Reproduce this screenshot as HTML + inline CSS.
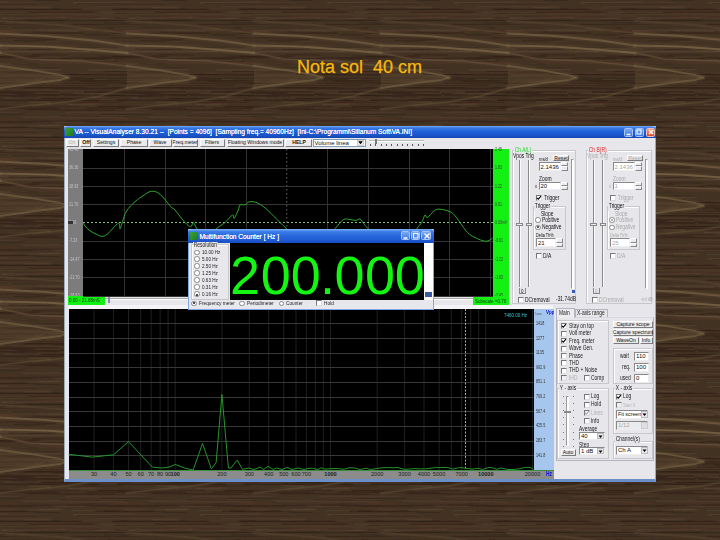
<!DOCTYPE html><html><head><meta charset="utf-8"><style>
*{margin:0;padding:0;box-sizing:border-box}
html,body{width:720px;height:540px;overflow:hidden}
body{position:relative;background:#3b2d21;font-family:"Liberation Sans",sans-serif}
.a{position:absolute}
.t{white-space:nowrap;font-size:6px;line-height:7px;color:#1a1a1a;transform:scaleX(.82) scaleY(1.08);transform-origin:0 0}
.btn span{position:absolute;left:50%;top:-1px;line-height:7px;transform:translateX(-50%) scaleX(.85)}
.btn{position:absolute;background:#ebebee;border:1px solid;border-color:#fff #7a7a7a #7a7a7a #fff;font-size:6px;line-height:6px;text-align:center;color:#111;white-space:nowrap}
.cb{position:absolute;width:6px;height:6px;background:#fff;border:1px solid;border-color:#777 #ddd #ddd #777}
.ed{position:absolute;background:#fff;border:1px solid;border-color:#888 #eee #eee #888;font-size:6px;line-height:6px;color:#111;padding-left:1px;white-space:nowrap}
.grp{position:absolute;border:1px solid #c8c8cc;box-shadow:inset 1px 1px 0 #fff}
.sp{position:absolute;background:#ececef;border:1px solid;border-color:#fff #888 #888 #fff}
</style></head><body><svg class="a" style="left:0;top:0" width="720" height="540"><defs><filter id="bl" x="0" y="0" width="1" height="1"><feGaussianBlur stdDeviation="0.75"/></filter><pattern id="wd" width="127" height="128" patternUnits="userSpaceOnUse"><rect width="127" height="128" fill="#423123"/><path d="M62.3 57.9L165.1 57.4" stroke="#22150c" stroke-opacity="0.30" stroke-width="1.5"/><path d="M-64.7 57.9L38.1 57.4" stroke="#22150c" stroke-opacity="0.30" stroke-width="1.5"/><path d="M189.3 57.9L292.1 57.4" stroke="#22150c" stroke-opacity="0.30" stroke-width="1.5"/><path d="M49.9 102.9L123.3 102.2" stroke="#22150c" stroke-opacity="0.28" stroke-width="1"/><path d="M-77.1 102.9L-3.7 102.2" stroke="#22150c" stroke-opacity="0.28" stroke-width="1"/><path d="M176.9 102.9L250.3 102.2" stroke="#22150c" stroke-opacity="0.28" stroke-width="1"/><path d="M81.9 103.6L100.9 104.0" stroke="#5a3428" stroke-opacity="0.44" stroke-width="1.5"/><path d="M-45.1 103.6L-26.1 104.0" stroke="#5a3428" stroke-opacity="0.44" stroke-width="1.5"/><path d="M208.9 103.6L227.9 104.0" stroke="#5a3428" stroke-opacity="0.44" stroke-width="1.5"/><path d="M71.6 83.2L165.6 83.4" stroke="#22150c" stroke-opacity="0.16" stroke-width="1"/><path d="M-55.4 83.2L38.6 83.4" stroke="#22150c" stroke-opacity="0.16" stroke-width="1"/><path d="M198.6 83.2L292.6 83.4" stroke="#22150c" stroke-opacity="0.16" stroke-width="1"/><path d="M28.0 99.6L99.1 99.6" stroke="#22150c" stroke-opacity="0.22" stroke-width="1.2"/><path d="M-99.0 99.6L-27.9 99.6" stroke="#22150c" stroke-opacity="0.22" stroke-width="1.2"/><path d="M155.0 99.6L226.1 99.6" stroke="#22150c" stroke-opacity="0.22" stroke-width="1.2"/><path d="M47.2 84.8L88.7 85.1" stroke="#5a3428" stroke-opacity="0.45" stroke-width="1"/><path d="M-79.8 84.8L-38.3 85.1" stroke="#5a3428" stroke-opacity="0.45" stroke-width="1"/><path d="M174.2 84.8L215.7 85.1" stroke="#5a3428" stroke-opacity="0.45" stroke-width="1"/><path d="M13.8 40.4L56.2 39.7" stroke="#22150c" stroke-opacity="0.38" stroke-width="1.2"/><path d="M-113.2 40.4L-70.8 39.7" stroke="#22150c" stroke-opacity="0.38" stroke-width="1.2"/><path d="M140.8 40.4L183.2 39.7" stroke="#22150c" stroke-opacity="0.38" stroke-width="1.2"/><path d="M-10.2 37.2L6.4 37.2" stroke="#64503a" stroke-opacity="0.21" stroke-width="1"/><path d="M-137.2 37.2L-120.6 37.2" stroke="#64503a" stroke-opacity="0.21" stroke-width="1"/><path d="M116.8 37.2L133.4 37.2" stroke="#64503a" stroke-opacity="0.21" stroke-width="1"/><path d="M38.4 125.5L60.4 125.2" stroke="#64503a" stroke-opacity="0.38" stroke-width="1.2"/><path d="M-88.6 125.5L-66.6 125.2" stroke="#64503a" stroke-opacity="0.38" stroke-width="1.2"/><path d="M165.4 125.5L187.4 125.2" stroke="#64503a" stroke-opacity="0.38" stroke-width="1.2"/><path d="M-17.8 39.8L36.2 39.2" stroke="#5a3428" stroke-opacity="0.19" stroke-width="1.5"/><path d="M-144.8 39.8L-90.8 39.2" stroke="#5a3428" stroke-opacity="0.19" stroke-width="1.5"/><path d="M109.2 39.8L163.2 39.2" stroke="#5a3428" stroke-opacity="0.19" stroke-width="1.5"/><path d="M97.2 7.7L129.0 8.4" stroke="#22150c" stroke-opacity="0.28" stroke-width="1"/><path d="M-29.8 7.7L2.0 8.4" stroke="#22150c" stroke-opacity="0.28" stroke-width="1"/><path d="M224.2 7.7L256.0 8.4" stroke="#22150c" stroke-opacity="0.28" stroke-width="1"/><path d="M41.6 98.5L93.1 98.1" stroke="#22150c" stroke-opacity="0.45" stroke-width="1"/><path d="M-85.4 98.5L-33.9 98.1" stroke="#22150c" stroke-opacity="0.45" stroke-width="1"/><path d="M168.6 98.5L220.1 98.1" stroke="#22150c" stroke-opacity="0.45" stroke-width="1"/><path d="M98.1 124.3L142.0 125.1" stroke="#5a3428" stroke-opacity="0.21" stroke-width="1.2"/><path d="M-28.9 124.3L15.0 125.1" stroke="#5a3428" stroke-opacity="0.21" stroke-width="1.2"/><path d="M225.1 124.3L269.0 125.1" stroke="#5a3428" stroke-opacity="0.21" stroke-width="1.2"/><path d="M64.8 77.1L83.8 77.5" stroke="#22150c" stroke-opacity="0.28" stroke-width="1"/><path d="M-62.2 77.1L-43.2 77.5" stroke="#22150c" stroke-opacity="0.28" stroke-width="1"/><path d="M191.8 77.1L210.8 77.5" stroke="#22150c" stroke-opacity="0.28" stroke-width="1"/><path d="M23.6 42.1L45.5 41.3" stroke="#22150c" stroke-opacity="0.32" stroke-width="1"/><path d="M-103.4 42.1L-81.5 41.3" stroke="#22150c" stroke-opacity="0.32" stroke-width="1"/><path d="M150.6 42.1L172.5 41.3" stroke="#22150c" stroke-opacity="0.32" stroke-width="1"/><path d="M71.5 47.2L98.5 47.8" stroke="#22150c" stroke-opacity="0.40" stroke-width="1"/><path d="M-55.5 47.2L-28.5 47.8" stroke="#22150c" stroke-opacity="0.40" stroke-width="1"/><path d="M198.5 47.2L225.5 47.8" stroke="#22150c" stroke-opacity="0.40" stroke-width="1"/><path d="M2.7 23.4L104.0 22.9" stroke="#64503a" stroke-opacity="0.22" stroke-width="1"/><path d="M-124.3 23.4L-23.0 22.9" stroke="#64503a" stroke-opacity="0.22" stroke-width="1"/><path d="M129.7 23.4L231.0 22.9" stroke="#64503a" stroke-opacity="0.22" stroke-width="1"/><path d="M61.4 80.5L141.7 80.4" stroke="#22150c" stroke-opacity="0.29" stroke-width="1"/><path d="M-65.6 80.5L14.7 80.4" stroke="#22150c" stroke-opacity="0.29" stroke-width="1"/><path d="M188.4 80.5L268.7 80.4" stroke="#22150c" stroke-opacity="0.29" stroke-width="1"/><path d="M-14.3 13.3L92.1 13.2" stroke="#22150c" stroke-opacity="0.36" stroke-width="1.2"/><path d="M-141.3 13.3L-34.9 13.2" stroke="#22150c" stroke-opacity="0.36" stroke-width="1.2"/><path d="M112.7 13.3L219.1 13.2" stroke="#22150c" stroke-opacity="0.36" stroke-width="1.2"/><path d="M52.2 115.8L116.6 115.4" stroke="#5a3428" stroke-opacity="0.44" stroke-width="1"/><path d="M-74.8 115.8L-10.4 115.4" stroke="#5a3428" stroke-opacity="0.44" stroke-width="1"/><path d="M179.2 115.8L243.6 115.4" stroke="#5a3428" stroke-opacity="0.44" stroke-width="1"/><path d="M105.3 71.6L178.7 72.0" stroke="#22150c" stroke-opacity="0.43" stroke-width="1"/><path d="M-21.7 71.6L51.7 72.0" stroke="#22150c" stroke-opacity="0.43" stroke-width="1"/><path d="M232.3 71.6L305.7 72.0" stroke="#22150c" stroke-opacity="0.43" stroke-width="1"/><path d="M40.5 8.9L79.1 9.0" stroke="#22150c" stroke-opacity="0.23" stroke-width="1.5"/><path d="M-86.5 8.9L-47.9 9.0" stroke="#22150c" stroke-opacity="0.23" stroke-width="1.5"/><path d="M167.5 8.9L206.1 9.0" stroke="#22150c" stroke-opacity="0.23" stroke-width="1.5"/><path d="M33.2 16.8L132.9 16.9" stroke="#5a3428" stroke-opacity="0.35" stroke-width="1.5"/><path d="M-93.8 16.8L5.9 16.9" stroke="#5a3428" stroke-opacity="0.35" stroke-width="1.5"/><path d="M160.2 16.8L259.9 16.9" stroke="#5a3428" stroke-opacity="0.35" stroke-width="1.5"/><path d="M66.7 121.2L169.5 121.9" stroke="#22150c" stroke-opacity="0.26" stroke-width="1.2"/><path d="M-60.3 121.2L42.5 121.9" stroke="#22150c" stroke-opacity="0.26" stroke-width="1.2"/><path d="M193.7 121.2L296.5 121.9" stroke="#22150c" stroke-opacity="0.26" stroke-width="1.2"/><path d="M73.5 2.7L134.3 2.0" stroke="#64503a" stroke-opacity="0.25" stroke-width="1"/><path d="M-53.5 2.7L7.3 2.0" stroke="#64503a" stroke-opacity="0.25" stroke-width="1"/><path d="M200.5 2.7L261.3 2.0" stroke="#64503a" stroke-opacity="0.25" stroke-width="1"/><path d="M88.3 69.9L188.9 69.7" stroke="#64503a" stroke-opacity="0.36" stroke-width="1.2"/><path d="M-38.7 69.9L61.9 69.7" stroke="#64503a" stroke-opacity="0.36" stroke-width="1.2"/><path d="M215.3 69.9L315.9 69.7" stroke="#64503a" stroke-opacity="0.36" stroke-width="1.2"/><path d="M112.4 87.7L210.2 87.8" stroke="#22150c" stroke-opacity="0.39" stroke-width="1.2"/><path d="M-14.6 87.7L83.2 87.8" stroke="#22150c" stroke-opacity="0.39" stroke-width="1.2"/><path d="M239.4 87.7L337.2 87.8" stroke="#22150c" stroke-opacity="0.39" stroke-width="1.2"/><path d="M36.2 80.0L106.6 79.4" stroke="#64503a" stroke-opacity="0.17" stroke-width="1.5"/><path d="M-90.8 80.0L-20.4 79.4" stroke="#64503a" stroke-opacity="0.17" stroke-width="1.5"/><path d="M163.2 80.0L233.6 79.4" stroke="#64503a" stroke-opacity="0.17" stroke-width="1.5"/><path d="M41.2 32.9L87.6 32.8" stroke="#5a3428" stroke-opacity="0.36" stroke-width="1.2"/><path d="M-85.8 32.9L-39.4 32.8" stroke="#5a3428" stroke-opacity="0.36" stroke-width="1.2"/><path d="M168.2 32.9L214.6 32.8" stroke="#5a3428" stroke-opacity="0.36" stroke-width="1.2"/><path d="M-7.7 107.3L78.6 106.5" stroke="#22150c" stroke-opacity="0.33" stroke-width="1.2"/><path d="M-134.7 107.3L-48.4 106.5" stroke="#22150c" stroke-opacity="0.33" stroke-width="1.2"/><path d="M119.3 107.3L205.6 106.5" stroke="#22150c" stroke-opacity="0.33" stroke-width="1.2"/><path d="M-3.4 122.5L85.7 122.3" stroke="#64503a" stroke-opacity="0.30" stroke-width="1"/><path d="M-130.4 122.5L-41.3 122.3" stroke="#64503a" stroke-opacity="0.30" stroke-width="1"/><path d="M123.6 122.5L212.7 122.3" stroke="#64503a" stroke-opacity="0.30" stroke-width="1"/><path d="M69.9 18.3L134.2 18.3" stroke="#64503a" stroke-opacity="0.25" stroke-width="1.2"/><path d="M-57.1 18.3L7.2 18.3" stroke="#64503a" stroke-opacity="0.25" stroke-width="1.2"/><path d="M196.9 18.3L261.2 18.3" stroke="#64503a" stroke-opacity="0.25" stroke-width="1.2"/><path d="M39.5 30.9L78.3 31.5" stroke="#64503a" stroke-opacity="0.39" stroke-width="1"/><path d="M-87.5 30.9L-48.7 31.5" stroke="#64503a" stroke-opacity="0.39" stroke-width="1"/><path d="M166.5 30.9L205.3 31.5" stroke="#64503a" stroke-opacity="0.39" stroke-width="1"/><path d="M65.7 49.2L110.8 49.5" stroke="#22150c" stroke-opacity="0.30" stroke-width="1"/><path d="M-61.3 49.2L-16.2 49.5" stroke="#22150c" stroke-opacity="0.30" stroke-width="1"/><path d="M192.7 49.2L237.8 49.5" stroke="#22150c" stroke-opacity="0.30" stroke-width="1"/><path d="M20.7 121.6L51.8 122.1" stroke="#22150c" stroke-opacity="0.23" stroke-width="1"/><path d="M-106.3 121.6L-75.2 122.1" stroke="#22150c" stroke-opacity="0.23" stroke-width="1"/><path d="M147.7 121.6L178.8 122.1" stroke="#22150c" stroke-opacity="0.23" stroke-width="1"/><path d="M56.4 49.0L135.3 48.9" stroke="#64503a" stroke-opacity="0.40" stroke-width="1.5"/><path d="M-70.6 49.0L8.3 48.9" stroke="#64503a" stroke-opacity="0.40" stroke-width="1.5"/><path d="M183.4 49.0L262.3 48.9" stroke="#64503a" stroke-opacity="0.40" stroke-width="1.5"/><path d="M-15.4 9.6L82.5 9.3" stroke="#22150c" stroke-opacity="0.36" stroke-width="1.5"/><path d="M-142.4 9.6L-44.5 9.3" stroke="#22150c" stroke-opacity="0.36" stroke-width="1.5"/><path d="M111.6 9.6L209.5 9.3" stroke="#22150c" stroke-opacity="0.36" stroke-width="1.5"/><path d="M62.9 83.1L138.8 82.7" stroke="#22150c" stroke-opacity="0.21" stroke-width="1.2"/><path d="M-64.1 83.1L11.8 82.7" stroke="#22150c" stroke-opacity="0.21" stroke-width="1.2"/><path d="M189.9 83.1L265.8 82.7" stroke="#22150c" stroke-opacity="0.21" stroke-width="1.2"/><path d="M-13.1 18.0L61.7 18.3" stroke="#22150c" stroke-opacity="0.34" stroke-width="1.5"/><path d="M-140.1 18.0L-65.3 18.3" stroke="#22150c" stroke-opacity="0.34" stroke-width="1.5"/><path d="M113.9 18.0L188.7 18.3" stroke="#22150c" stroke-opacity="0.34" stroke-width="1.5"/><path d="M-8.5 47.2L25.3 46.4" stroke="#64503a" stroke-opacity="0.23" stroke-width="1.5"/><path d="M-135.5 47.2L-101.7 46.4" stroke="#64503a" stroke-opacity="0.23" stroke-width="1.5"/><path d="M118.5 47.2L152.3 46.4" stroke="#64503a" stroke-opacity="0.23" stroke-width="1.5"/><path d="M85.0 60.4L117.0 61.2" stroke="#22150c" stroke-opacity="0.25" stroke-width="1.5"/><path d="M-42.0 60.4L-10.0 61.2" stroke="#22150c" stroke-opacity="0.25" stroke-width="1.5"/><path d="M212.0 60.4L244.0 61.2" stroke="#22150c" stroke-opacity="0.25" stroke-width="1.5"/><path d="M126.5 64.1L156.7 63.4" stroke="#64503a" stroke-opacity="0.36" stroke-width="1"/><path d="M-0.5 64.1L29.7 63.4" stroke="#64503a" stroke-opacity="0.36" stroke-width="1"/><path d="M253.5 64.1L283.7 63.4" stroke="#64503a" stroke-opacity="0.36" stroke-width="1"/><path d="M86.2 119.4L113.5 119.2" stroke="#22150c" stroke-opacity="0.34" stroke-width="1"/><path d="M-40.8 119.4L-13.5 119.2" stroke="#22150c" stroke-opacity="0.34" stroke-width="1"/><path d="M213.2 119.4L240.5 119.2" stroke="#22150c" stroke-opacity="0.34" stroke-width="1"/><path d="M109.3 72.8L200.0 73.6" stroke="#5a3428" stroke-opacity="0.29" stroke-width="1.5"/><path d="M-17.7 72.8L73.0 73.6" stroke="#5a3428" stroke-opacity="0.29" stroke-width="1.5"/><path d="M236.3 72.8L327.0 73.6" stroke="#5a3428" stroke-opacity="0.29" stroke-width="1.5"/><path d="M107.3 12.7L198.2 13.3" stroke="#5a3428" stroke-opacity="0.19" stroke-width="1"/><path d="M-19.7 12.7L71.2 13.3" stroke="#5a3428" stroke-opacity="0.19" stroke-width="1"/><path d="M234.3 12.7L325.2 13.3" stroke="#5a3428" stroke-opacity="0.19" stroke-width="1"/><path d="M123.7 125.5L189.7 126.1" stroke="#64503a" stroke-opacity="0.25" stroke-width="1.5"/><path d="M-3.3 125.5L62.7 126.1" stroke="#64503a" stroke-opacity="0.25" stroke-width="1.5"/><path d="M250.7 125.5L316.7 126.1" stroke="#64503a" stroke-opacity="0.25" stroke-width="1.5"/><path d="M-7.8 44.6L49.1 45.3" stroke="#22150c" stroke-opacity="0.38" stroke-width="1.2"/><path d="M-134.8 44.6L-77.9 45.3" stroke="#22150c" stroke-opacity="0.38" stroke-width="1.2"/><path d="M119.2 44.6L176.1 45.3" stroke="#22150c" stroke-opacity="0.38" stroke-width="1.2"/><path d="M107.5 27.9L163.3 28.4" stroke="#22150c" stroke-opacity="0.31" stroke-width="1.5"/><path d="M-19.5 27.9L36.3 28.4" stroke="#22150c" stroke-opacity="0.31" stroke-width="1.5"/><path d="M234.5 27.9L290.3 28.4" stroke="#22150c" stroke-opacity="0.31" stroke-width="1.5"/><path d="M1.9 18.0L65.9 17.9" stroke="#64503a" stroke-opacity="0.40" stroke-width="1.5"/><path d="M-125.1 18.0L-61.1 17.9" stroke="#64503a" stroke-opacity="0.40" stroke-width="1.5"/><path d="M128.9 18.0L192.9 17.9" stroke="#64503a" stroke-opacity="0.40" stroke-width="1.5"/><path d="M65.1 112.6L145.6 112.3" stroke="#64503a" stroke-opacity="0.28" stroke-width="1.5"/><path d="M-61.9 112.6L18.6 112.3" stroke="#64503a" stroke-opacity="0.28" stroke-width="1.5"/><path d="M192.1 112.6L272.6 112.3" stroke="#64503a" stroke-opacity="0.28" stroke-width="1.5"/><path d="M73.9 93.3L138.6 93.6" stroke="#64503a" stroke-opacity="0.32" stroke-width="1.2"/><path d="M-53.1 93.3L11.6 93.6" stroke="#64503a" stroke-opacity="0.32" stroke-width="1.2"/><path d="M200.9 93.3L265.6 93.6" stroke="#64503a" stroke-opacity="0.32" stroke-width="1.2"/><path d="M107.9 122.2L180.8 122.3" stroke="#22150c" stroke-opacity="0.19" stroke-width="1.5"/><path d="M-19.1 122.2L53.8 122.3" stroke="#22150c" stroke-opacity="0.19" stroke-width="1.5"/><path d="M234.9 122.2L307.8 122.3" stroke="#22150c" stroke-opacity="0.19" stroke-width="1.5"/><path d="M9.5 73.3L75.5 73.4" stroke="#22150c" stroke-opacity="0.33" stroke-width="1"/><path d="M-117.5 73.3L-51.5 73.4" stroke="#22150c" stroke-opacity="0.33" stroke-width="1"/><path d="M136.5 73.3L202.5 73.4" stroke="#22150c" stroke-opacity="0.33" stroke-width="1"/><path d="M114.9 5.6L181.5 5.9" stroke="#5a3428" stroke-opacity="0.19" stroke-width="1"/><path d="M-12.1 5.6L54.5 5.9" stroke="#5a3428" stroke-opacity="0.19" stroke-width="1"/><path d="M241.9 5.6L308.5 5.9" stroke="#5a3428" stroke-opacity="0.19" stroke-width="1"/><path d="M59.2 8.4L113.5 8.0" stroke="#5a3428" stroke-opacity="0.43" stroke-width="1.2"/><path d="M-67.8 8.4L-13.5 8.0" stroke="#5a3428" stroke-opacity="0.43" stroke-width="1.2"/><path d="M186.2 8.4L240.5 8.0" stroke="#5a3428" stroke-opacity="0.43" stroke-width="1.2"/><path d="M29.9 63.1L130.5 62.8" stroke="#5a3428" stroke-opacity="0.43" stroke-width="1.5"/><path d="M-97.1 63.1L3.5 62.8" stroke="#5a3428" stroke-opacity="0.43" stroke-width="1.5"/><path d="M156.9 63.1L257.5 62.8" stroke="#5a3428" stroke-opacity="0.43" stroke-width="1.5"/><path d="M70.8 24.5L173.7 23.8" stroke="#22150c" stroke-opacity="0.38" stroke-width="1"/><path d="M-56.2 24.5L46.7 23.8" stroke="#22150c" stroke-opacity="0.38" stroke-width="1"/><path d="M197.8 24.5L300.7 23.8" stroke="#22150c" stroke-opacity="0.38" stroke-width="1"/><path d="M-18.3 19.9L23.7 19.3" stroke="#64503a" stroke-opacity="0.22" stroke-width="1.2"/><path d="M-145.3 19.9L-103.3 19.3" stroke="#64503a" stroke-opacity="0.22" stroke-width="1.2"/><path d="M108.7 19.9L150.7 19.3" stroke="#64503a" stroke-opacity="0.22" stroke-width="1.2"/><path d="M-2.0 93.6L61.5 94.2" stroke="#22150c" stroke-opacity="0.21" stroke-width="1.5"/><path d="M-129.0 93.6L-65.5 94.2" stroke="#22150c" stroke-opacity="0.21" stroke-width="1.5"/><path d="M125.0 93.6L188.5 94.2" stroke="#22150c" stroke-opacity="0.21" stroke-width="1.5"/><path d="M73.1 3.0L166.4 3.0" stroke="#64503a" stroke-opacity="0.31" stroke-width="1.5"/><path d="M-53.9 3.0L39.4 3.0" stroke="#64503a" stroke-opacity="0.31" stroke-width="1.5"/><path d="M200.1 3.0L293.4 3.0" stroke="#64503a" stroke-opacity="0.31" stroke-width="1.5"/><path d="M11.8 27.9L78.4 28.2" stroke="#22150c" stroke-opacity="0.19" stroke-width="1.5"/><path d="M-115.2 27.9L-48.6 28.2" stroke="#22150c" stroke-opacity="0.19" stroke-width="1.5"/><path d="M138.8 27.9L205.4 28.2" stroke="#22150c" stroke-opacity="0.19" stroke-width="1.5"/><path d="M6.6 44.5L78.9 45.1" stroke="#5a3428" stroke-opacity="0.21" stroke-width="1"/><path d="M-120.4 44.5L-48.1 45.1" stroke="#5a3428" stroke-opacity="0.21" stroke-width="1"/><path d="M133.6 44.5L205.9 45.1" stroke="#5a3428" stroke-opacity="0.21" stroke-width="1"/><path d="M15.2 17.1L99.2 17.2" stroke="#22150c" stroke-opacity="0.18" stroke-width="1.2"/><path d="M-111.8 17.1L-27.8 17.2" stroke="#22150c" stroke-opacity="0.18" stroke-width="1.2"/><path d="M142.2 17.1L226.2 17.2" stroke="#22150c" stroke-opacity="0.18" stroke-width="1.2"/><path d="M9.5 90.2L84.2 90.5" stroke="#64503a" stroke-opacity="0.18" stroke-width="1.5"/><path d="M-117.5 90.2L-42.8 90.5" stroke="#64503a" stroke-opacity="0.18" stroke-width="1.5"/><path d="M136.5 90.2L211.2 90.5" stroke="#64503a" stroke-opacity="0.18" stroke-width="1.5"/><path d="M122.4 116.7L148.3 117.5" stroke="#22150c" stroke-opacity="0.38" stroke-width="1.5"/><path d="M-4.6 116.7L21.3 117.5" stroke="#22150c" stroke-opacity="0.38" stroke-width="1.5"/><path d="M249.4 116.7L275.3 117.5" stroke="#22150c" stroke-opacity="0.38" stroke-width="1.5"/><path d="M98.0 106.6L158.8 106.6" stroke="#22150c" stroke-opacity="0.38" stroke-width="1.5"/><path d="M-29.0 106.6L31.8 106.6" stroke="#22150c" stroke-opacity="0.38" stroke-width="1.5"/><path d="M225.0 106.6L285.8 106.6" stroke="#22150c" stroke-opacity="0.38" stroke-width="1.5"/><path d="M1.5 72.8L34.1 73.5" stroke="#22150c" stroke-opacity="0.40" stroke-width="1.2"/><path d="M-125.5 72.8L-92.9 73.5" stroke="#22150c" stroke-opacity="0.40" stroke-width="1.2"/><path d="M128.5 72.8L161.1 73.5" stroke="#22150c" stroke-opacity="0.40" stroke-width="1.2"/><path d="M-10.9 12.2L94.5 12.0" stroke="#22150c" stroke-opacity="0.38" stroke-width="1.2"/><path d="M-137.9 12.2L-32.5 12.0" stroke="#22150c" stroke-opacity="0.38" stroke-width="1.2"/><path d="M116.1 12.2L221.5 12.0" stroke="#22150c" stroke-opacity="0.38" stroke-width="1.2"/><path d="M32.1 54.6L67.1 55.1" stroke="#22150c" stroke-opacity="0.34" stroke-width="1"/><path d="M-94.9 54.6L-59.9 55.1" stroke="#22150c" stroke-opacity="0.34" stroke-width="1"/><path d="M159.1 54.6L194.1 55.1" stroke="#22150c" stroke-opacity="0.34" stroke-width="1"/><path d="M46.7 23.2L132.0 22.6" stroke="#22150c" stroke-opacity="0.21" stroke-width="1"/><path d="M-80.3 23.2L5.0 22.6" stroke="#22150c" stroke-opacity="0.21" stroke-width="1"/><path d="M173.7 23.2L259.0 22.6" stroke="#22150c" stroke-opacity="0.21" stroke-width="1"/><path d="M27.6 101.4L50.6 102.1" stroke="#64503a" stroke-opacity="0.41" stroke-width="1.5"/><path d="M-99.4 101.4L-76.4 102.1" stroke="#64503a" stroke-opacity="0.41" stroke-width="1.5"/><path d="M154.6 101.4L177.6 102.1" stroke="#64503a" stroke-opacity="0.41" stroke-width="1.5"/><path d="M8.1 72.9L78.6 73.6" stroke="#22150c" stroke-opacity="0.38" stroke-width="1.2"/><path d="M-118.9 72.9L-48.4 73.6" stroke="#22150c" stroke-opacity="0.38" stroke-width="1.2"/><path d="M135.1 72.9L205.6 73.6" stroke="#22150c" stroke-opacity="0.38" stroke-width="1.2"/><path d="M94.4 95.3L186.8 95.6" stroke="#22150c" stroke-opacity="0.42" stroke-width="1.5"/><path d="M-32.6 95.3L59.8 95.6" stroke="#22150c" stroke-opacity="0.42" stroke-width="1.5"/><path d="M221.4 95.3L313.8 95.6" stroke="#22150c" stroke-opacity="0.42" stroke-width="1.5"/><path d="M92.5 98.2L146.0 97.9" stroke="#64503a" stroke-opacity="0.17" stroke-width="1.2"/><path d="M-34.5 98.2L19.0 97.9" stroke="#64503a" stroke-opacity="0.17" stroke-width="1.2"/><path d="M219.5 98.2L273.0 97.9" stroke="#64503a" stroke-opacity="0.17" stroke-width="1.2"/><path d="M110.5 12.9L219.6 13.6" stroke="#5a3428" stroke-opacity="0.16" stroke-width="1.2"/><path d="M-16.5 12.9L92.6 13.6" stroke="#5a3428" stroke-opacity="0.16" stroke-width="1.2"/><path d="M237.5 12.9L346.6 13.6" stroke="#5a3428" stroke-opacity="0.16" stroke-width="1.2"/><path d="M29.7 85.3L107.3 85.3" stroke="#22150c" stroke-opacity="0.31" stroke-width="1.2"/><path d="M-97.3 85.3L-19.7 85.3" stroke="#22150c" stroke-opacity="0.31" stroke-width="1.2"/><path d="M156.7 85.3L234.3 85.3" stroke="#22150c" stroke-opacity="0.31" stroke-width="1.2"/><path d="M11.3 63.7L37.7 63.9" stroke="#22150c" stroke-opacity="0.32" stroke-width="1"/><path d="M-115.7 63.7L-89.3 63.9" stroke="#22150c" stroke-opacity="0.32" stroke-width="1"/><path d="M138.3 63.7L164.7 63.9" stroke="#22150c" stroke-opacity="0.32" stroke-width="1"/><path d="M17.7 94.6L70.9 93.8" stroke="#22150c" stroke-opacity="0.21" stroke-width="1.2"/><path d="M-109.3 94.6L-56.1 93.8" stroke="#22150c" stroke-opacity="0.21" stroke-width="1.2"/><path d="M144.7 94.6L197.9 93.8" stroke="#22150c" stroke-opacity="0.21" stroke-width="1.2"/><path d="M20.5 33.1L67.9 33.2" stroke="#22150c" stroke-opacity="0.27" stroke-width="1.5"/><path d="M-106.5 33.1L-59.1 33.2" stroke="#22150c" stroke-opacity="0.27" stroke-width="1.5"/><path d="M147.5 33.1L194.9 33.2" stroke="#22150c" stroke-opacity="0.27" stroke-width="1.5"/><path d="M73.8 127.4L165.7 127.2" stroke="#22150c" stroke-opacity="0.33" stroke-width="1"/><path d="M-53.2 127.4L38.7 127.2" stroke="#22150c" stroke-opacity="0.33" stroke-width="1"/><path d="M200.8 127.4L292.7 127.2" stroke="#22150c" stroke-opacity="0.33" stroke-width="1"/><path d="M36.7 120.1L143.9 119.4" stroke="#5a3428" stroke-opacity="0.31" stroke-width="1.5"/><path d="M-90.3 120.1L16.9 119.4" stroke="#5a3428" stroke-opacity="0.31" stroke-width="1.5"/><path d="M163.7 120.1L270.9 119.4" stroke="#5a3428" stroke-opacity="0.31" stroke-width="1.5"/><path d="M41.8 121.0L106.9 121.0" stroke="#22150c" stroke-opacity="0.26" stroke-width="1.2"/><path d="M-85.2 121.0L-20.1 121.0" stroke="#22150c" stroke-opacity="0.26" stroke-width="1.2"/><path d="M168.8 121.0L233.9 121.0" stroke="#22150c" stroke-opacity="0.26" stroke-width="1.2"/><path d="M116.6 34.5L194.7 34.7" stroke="#64503a" stroke-opacity="0.16" stroke-width="1"/><path d="M-10.4 34.5L67.7 34.7" stroke="#64503a" stroke-opacity="0.16" stroke-width="1"/><path d="M243.6 34.5L321.7 34.7" stroke="#64503a" stroke-opacity="0.16" stroke-width="1"/><path d="M40.1 81.0L120.1 80.3" stroke="#22150c" stroke-opacity="0.24" stroke-width="1.2"/><path d="M-86.9 81.0L-6.9 80.3" stroke="#22150c" stroke-opacity="0.24" stroke-width="1.2"/><path d="M167.1 81.0L247.1 80.3" stroke="#22150c" stroke-opacity="0.24" stroke-width="1.2"/><path d="M118.8 126.6L140.8 126.2" stroke="#5a3428" stroke-opacity="0.28" stroke-width="1.2"/><path d="M-8.2 126.6L13.8 126.2" stroke="#5a3428" stroke-opacity="0.28" stroke-width="1.2"/><path d="M245.8 126.6L267.8 126.2" stroke="#5a3428" stroke-opacity="0.28" stroke-width="1.2"/><path d="M-13.3 96.7L11.0 97.5" stroke="#64503a" stroke-opacity="0.42" stroke-width="1"/><path d="M-140.3 96.7L-116.0 97.5" stroke="#64503a" stroke-opacity="0.42" stroke-width="1"/><path d="M113.7 96.7L138.0 97.5" stroke="#64503a" stroke-opacity="0.42" stroke-width="1"/><path d="M68.7 104.5L94.7 105.1" stroke="#64503a" stroke-opacity="0.29" stroke-width="1"/><path d="M-58.3 104.5L-32.3 105.1" stroke="#64503a" stroke-opacity="0.29" stroke-width="1"/><path d="M195.7 104.5L221.7 105.1" stroke="#64503a" stroke-opacity="0.29" stroke-width="1"/><path d="M2.7 45.7L52.3 45.3" stroke="#22150c" stroke-opacity="0.28" stroke-width="1.5"/><path d="M-124.3 45.7L-74.7 45.3" stroke="#22150c" stroke-opacity="0.28" stroke-width="1.5"/><path d="M129.7 45.7L179.3 45.3" stroke="#22150c" stroke-opacity="0.28" stroke-width="1.5"/><path d="M41.7 74.5L130.6 74.9" stroke="#22150c" stroke-opacity="0.45" stroke-width="1.2"/><path d="M-85.3 74.5L3.6 74.9" stroke="#22150c" stroke-opacity="0.45" stroke-width="1.2"/><path d="M168.7 74.5L257.6 74.9" stroke="#22150c" stroke-opacity="0.45" stroke-width="1.2"/><path d="M-3.3 30.5L96.5 30.2" stroke="#64503a" stroke-opacity="0.34" stroke-width="1.2"/><path d="M-130.3 30.5L-30.5 30.2" stroke="#64503a" stroke-opacity="0.34" stroke-width="1.2"/><path d="M123.7 30.5L223.5 30.2" stroke="#64503a" stroke-opacity="0.34" stroke-width="1.2"/><path d="M86.6 78.1L168.0 77.6" stroke="#22150c" stroke-opacity="0.23" stroke-width="1"/><path d="M-40.4 78.1L41.0 77.6" stroke="#22150c" stroke-opacity="0.23" stroke-width="1"/><path d="M213.6 78.1L295.0 77.6" stroke="#22150c" stroke-opacity="0.23" stroke-width="1"/><path d="M124.0 31.9L226.0 31.1" stroke="#5a3428" stroke-opacity="0.16" stroke-width="1"/><path d="M-3.0 31.9L99.0 31.1" stroke="#5a3428" stroke-opacity="0.16" stroke-width="1"/><path d="M251.0 31.9L353.0 31.1" stroke="#5a3428" stroke-opacity="0.16" stroke-width="1"/><path d="M-16.0 33.2L2.6 33.9" stroke="#22150c" stroke-opacity="0.23" stroke-width="1"/><path d="M-143.0 33.2L-124.4 33.9" stroke="#22150c" stroke-opacity="0.23" stroke-width="1"/><path d="M111.0 33.2L129.6 33.9" stroke="#22150c" stroke-opacity="0.23" stroke-width="1"/><path d="M14.5 20.6L122.8 20.3" stroke="#22150c" stroke-opacity="0.26" stroke-width="1.2"/><path d="M-112.5 20.6L-4.2 20.3" stroke="#22150c" stroke-opacity="0.26" stroke-width="1.2"/><path d="M141.5 20.6L249.8 20.3" stroke="#22150c" stroke-opacity="0.26" stroke-width="1.2"/><path d="M103.3 95.3L125.3 95.9" stroke="#22150c" stroke-opacity="0.39" stroke-width="1.5"/><path d="M-23.7 95.3L-1.7 95.9" stroke="#22150c" stroke-opacity="0.39" stroke-width="1.5"/><path d="M230.3 95.3L252.3 95.9" stroke="#22150c" stroke-opacity="0.39" stroke-width="1.5"/><path d="M45.3 98.4L131.3 98.7" stroke="#22150c" stroke-opacity="0.20" stroke-width="1"/><path d="M-81.7 98.4L4.3 98.7" stroke="#22150c" stroke-opacity="0.20" stroke-width="1"/><path d="M172.3 98.4L258.3 98.7" stroke="#22150c" stroke-opacity="0.20" stroke-width="1"/><path d="M27.8 126.6L95.0 126.9" stroke="#64503a" stroke-opacity="0.43" stroke-width="1.2"/><path d="M-99.2 126.6L-32.0 126.9" stroke="#64503a" stroke-opacity="0.43" stroke-width="1.2"/><path d="M154.8 126.6L222.0 126.9" stroke="#64503a" stroke-opacity="0.43" stroke-width="1.2"/><path d="M47.9 74.3L93.7 74.3" stroke="#22150c" stroke-opacity="0.28" stroke-width="1.5"/><path d="M-79.1 74.3L-33.3 74.3" stroke="#22150c" stroke-opacity="0.28" stroke-width="1.5"/><path d="M174.9 74.3L220.7 74.3" stroke="#22150c" stroke-opacity="0.28" stroke-width="1.5"/><path d="M23.9 87.7L112.6 87.9" stroke="#22150c" stroke-opacity="0.21" stroke-width="1.5"/><path d="M-103.1 87.7L-14.4 87.9" stroke="#22150c" stroke-opacity="0.21" stroke-width="1.5"/><path d="M150.9 87.7L239.6 87.9" stroke="#22150c" stroke-opacity="0.21" stroke-width="1.5"/><path d="M52.7 89.0L140.3 88.7" stroke="#22150c" stroke-opacity="0.41" stroke-width="1"/><path d="M-74.3 89.0L13.3 88.7" stroke="#22150c" stroke-opacity="0.41" stroke-width="1"/><path d="M179.7 89.0L267.3 88.7" stroke="#22150c" stroke-opacity="0.41" stroke-width="1"/><path d="M33.9 92.9L60.0 93.6" stroke="#64503a" stroke-opacity="0.32" stroke-width="1.5"/><path d="M-93.1 92.9L-67.0 93.6" stroke="#64503a" stroke-opacity="0.32" stroke-width="1.5"/><path d="M160.9 92.9L187.0 93.6" stroke="#64503a" stroke-opacity="0.32" stroke-width="1.5"/><path d="M98.0 56.1L142.0 56.7" stroke="#22150c" stroke-opacity="0.27" stroke-width="1.5"/><path d="M-29.0 56.1L15.0 56.7" stroke="#22150c" stroke-opacity="0.27" stroke-width="1.5"/><path d="M225.0 56.1L269.0 56.7" stroke="#22150c" stroke-opacity="0.27" stroke-width="1.5"/><path d="M33.2 31.8L82.9 32.3" stroke="#22150c" stroke-opacity="0.27" stroke-width="1.2"/><path d="M-93.8 31.8L-44.1 32.3" stroke="#22150c" stroke-opacity="0.27" stroke-width="1.2"/><path d="M160.2 31.8L209.9 32.3" stroke="#22150c" stroke-opacity="0.27" stroke-width="1.2"/><path d="M34.1 94.6L86.2 94.1" stroke="#22150c" stroke-opacity="0.33" stroke-width="1"/><path d="M-92.9 94.6L-40.8 94.1" stroke="#22150c" stroke-opacity="0.33" stroke-width="1"/><path d="M161.1 94.6L213.2 94.1" stroke="#22150c" stroke-opacity="0.33" stroke-width="1"/><path d="M109.5 97.1L151.2 96.6" stroke="#22150c" stroke-opacity="0.30" stroke-width="1.5"/><path d="M-17.5 97.1L24.2 96.6" stroke="#22150c" stroke-opacity="0.30" stroke-width="1.5"/><path d="M236.5 97.1L278.2 96.6" stroke="#22150c" stroke-opacity="0.30" stroke-width="1.5"/><path d="M-16.7 37.9L78.2 38.3" stroke="#22150c" stroke-opacity="0.32" stroke-width="1.2"/><path d="M-143.7 37.9L-48.8 38.3" stroke="#22150c" stroke-opacity="0.32" stroke-width="1.2"/><path d="M110.3 37.9L205.2 38.3" stroke="#22150c" stroke-opacity="0.32" stroke-width="1.2"/><path d="M-8.0 10.8L77.0 11.0" stroke="#5a3428" stroke-opacity="0.18" stroke-width="1.5"/><path d="M-135.0 10.8L-50.0 11.0" stroke="#5a3428" stroke-opacity="0.18" stroke-width="1.5"/><path d="M119.0 10.8L204.0 11.0" stroke="#5a3428" stroke-opacity="0.18" stroke-width="1.5"/><path d="M100.0 12.5L155.1 12.2" stroke="#64503a" stroke-opacity="0.30" stroke-width="1.5"/><path d="M-27.0 12.5L28.1 12.2" stroke="#64503a" stroke-opacity="0.30" stroke-width="1.5"/><path d="M227.0 12.5L282.1 12.2" stroke="#64503a" stroke-opacity="0.30" stroke-width="1.5"/><path d="M31.5 58.8L123.2 58.8" stroke="#22150c" stroke-opacity="0.19" stroke-width="1.2"/><path d="M-95.5 58.8L-3.8 58.8" stroke="#22150c" stroke-opacity="0.19" stroke-width="1.2"/><path d="M158.5 58.8L250.2 58.8" stroke="#22150c" stroke-opacity="0.19" stroke-width="1.2"/><path d="M84.1 92.3L186.0 92.0" stroke="#22150c" stroke-opacity="0.40" stroke-width="1.5"/><path d="M-42.9 92.3L59.0 92.0" stroke="#22150c" stroke-opacity="0.40" stroke-width="1.5"/><path d="M211.1 92.3L313.0 92.0" stroke="#22150c" stroke-opacity="0.40" stroke-width="1.5"/><path d="M35.6 0.5L59.0 0.5" stroke="#22150c" stroke-opacity="0.31" stroke-width="1"/><path d="M-91.4 0.5L-68.0 0.5" stroke="#22150c" stroke-opacity="0.31" stroke-width="1"/><path d="M162.6 0.5L186.0 0.5" stroke="#22150c" stroke-opacity="0.31" stroke-width="1"/><path d="M97.9 90.9L153.0 90.4" stroke="#22150c" stroke-opacity="0.19" stroke-width="1.5"/><path d="M-29.1 90.9L26.0 90.4" stroke="#22150c" stroke-opacity="0.19" stroke-width="1.5"/><path d="M224.9 90.9L280.0 90.4" stroke="#22150c" stroke-opacity="0.19" stroke-width="1.5"/><path d="M80.6 81.3L126.0 82.1" stroke="#22150c" stroke-opacity="0.31" stroke-width="1.2"/><path d="M-46.4 81.3L-1.0 82.1" stroke="#22150c" stroke-opacity="0.31" stroke-width="1.2"/><path d="M207.6 81.3L253.0 82.1" stroke="#22150c" stroke-opacity="0.31" stroke-width="1.2"/><path d="M25.3 7.6L51.2 8.2" stroke="#64503a" stroke-opacity="0.38" stroke-width="1"/><path d="M-101.7 7.6L-75.8 8.2" stroke="#64503a" stroke-opacity="0.38" stroke-width="1"/><path d="M152.3 7.6L178.2 8.2" stroke="#64503a" stroke-opacity="0.38" stroke-width="1"/><path d="M-17.5 96.4L43.2 95.9" stroke="#64503a" stroke-opacity="0.24" stroke-width="1"/><path d="M-144.5 96.4L-83.8 95.9" stroke="#64503a" stroke-opacity="0.24" stroke-width="1"/><path d="M109.5 96.4L170.2 95.9" stroke="#64503a" stroke-opacity="0.24" stroke-width="1"/><path d="M14.6 27.8L97.7 28.5" stroke="#22150c" stroke-opacity="0.22" stroke-width="1"/><path d="M-112.4 27.8L-29.3 28.5" stroke="#22150c" stroke-opacity="0.22" stroke-width="1"/><path d="M141.6 27.8L224.7 28.5" stroke="#22150c" stroke-opacity="0.22" stroke-width="1"/><path d="M113.9 51.5L217.9 51.5" stroke="#64503a" stroke-opacity="0.43" stroke-width="1.5"/><path d="M-13.1 51.5L90.9 51.5" stroke="#64503a" stroke-opacity="0.43" stroke-width="1.5"/><path d="M240.9 51.5L344.9 51.5" stroke="#64503a" stroke-opacity="0.43" stroke-width="1.5"/><path d="M110.5 33.3L212.3 33.3" stroke="#22150c" stroke-opacity="0.31" stroke-width="1"/><path d="M-16.5 33.3L85.3 33.3" stroke="#22150c" stroke-opacity="0.31" stroke-width="1"/><path d="M237.5 33.3L339.3 33.3" stroke="#22150c" stroke-opacity="0.31" stroke-width="1"/><path d="M-12.7 28.3L92.3 28.8" stroke="#64503a" stroke-opacity="0.27" stroke-width="1.5"/><path d="M-139.7 28.3L-34.7 28.8" stroke="#64503a" stroke-opacity="0.27" stroke-width="1.5"/><path d="M114.3 28.3L219.3 28.8" stroke="#64503a" stroke-opacity="0.27" stroke-width="1.5"/><path d="M95.8 99.1L116.3 99.7" stroke="#5a3428" stroke-opacity="0.42" stroke-width="1.2"/><path d="M-31.2 99.1L-10.7 99.7" stroke="#5a3428" stroke-opacity="0.42" stroke-width="1.2"/><path d="M222.8 99.1L243.3 99.7" stroke="#5a3428" stroke-opacity="0.42" stroke-width="1.2"/><path d="M16.2 57.6L71.3 57.0" stroke="#5a3428" stroke-opacity="0.27" stroke-width="1.2"/><path d="M-110.8 57.6L-55.7 57.0" stroke="#5a3428" stroke-opacity="0.27" stroke-width="1.2"/><path d="M143.2 57.6L198.3 57.0" stroke="#5a3428" stroke-opacity="0.27" stroke-width="1.2"/><path d="M99.1 116.2L126.5 116.3" stroke="#64503a" stroke-opacity="0.34" stroke-width="1.5"/><path d="M-27.9 116.2L-0.5 116.3" stroke="#64503a" stroke-opacity="0.34" stroke-width="1.5"/><path d="M226.1 116.2L253.5 116.3" stroke="#64503a" stroke-opacity="0.34" stroke-width="1.5"/><path d="M93.2 19.3L108.4 18.6" stroke="#64503a" stroke-opacity="0.40" stroke-width="1"/><path d="M-33.8 19.3L-18.6 18.6" stroke="#64503a" stroke-opacity="0.40" stroke-width="1"/><path d="M220.2 19.3L235.4 18.6" stroke="#64503a" stroke-opacity="0.40" stroke-width="1"/><path d="M85.3 34.5L109.6 34.7" stroke="#22150c" stroke-opacity="0.29" stroke-width="1.5"/><path d="M-41.7 34.5L-17.4 34.7" stroke="#22150c" stroke-opacity="0.29" stroke-width="1.5"/><path d="M212.3 34.5L236.6 34.7" stroke="#22150c" stroke-opacity="0.29" stroke-width="1.5"/><path d="M24.6 109.7L114.6 110.2" stroke="#22150c" stroke-opacity="0.43" stroke-width="1"/><path d="M-102.4 109.7L-12.4 110.2" stroke="#22150c" stroke-opacity="0.43" stroke-width="1"/><path d="M151.6 109.7L241.6 110.2" stroke="#22150c" stroke-opacity="0.43" stroke-width="1"/><path d="M-14.5 56.3L39.7 56.1" stroke="#22150c" stroke-opacity="0.43" stroke-width="1.2"/><path d="M-141.5 56.3L-87.3 56.1" stroke="#22150c" stroke-opacity="0.43" stroke-width="1.2"/><path d="M112.5 56.3L166.7 56.1" stroke="#22150c" stroke-opacity="0.43" stroke-width="1.2"/><path d="M61.8 51.9L171.5 52.2" stroke="#64503a" stroke-opacity="0.17" stroke-width="1"/><path d="M-65.2 51.9L44.5 52.2" stroke="#64503a" stroke-opacity="0.17" stroke-width="1"/><path d="M188.8 51.9L298.5 52.2" stroke="#64503a" stroke-opacity="0.17" stroke-width="1"/><path d="M38.0 13.5L96.8 13.4" stroke="#5a3428" stroke-opacity="0.40" stroke-width="1.5"/><path d="M-89.0 13.5L-30.2 13.4" stroke="#5a3428" stroke-opacity="0.40" stroke-width="1.5"/><path d="M165.0 13.5L223.8 13.4" stroke="#5a3428" stroke-opacity="0.40" stroke-width="1.5"/><path d="M84.6 110.6L144.8 111.1" stroke="#22150c" stroke-opacity="0.18" stroke-width="1"/><path d="M-42.4 110.6L17.8 111.1" stroke="#22150c" stroke-opacity="0.18" stroke-width="1"/><path d="M211.6 110.6L271.8 111.1" stroke="#22150c" stroke-opacity="0.18" stroke-width="1"/><path d="M85.7 108.1L186.4 108.5" stroke="#22150c" stroke-opacity="0.34" stroke-width="1.5"/><path d="M-41.3 108.1L59.4 108.5" stroke="#22150c" stroke-opacity="0.34" stroke-width="1.5"/><path d="M212.7 108.1L313.4 108.5" stroke="#22150c" stroke-opacity="0.34" stroke-width="1.5"/><path d="M91.0 122.1L158.8 122.5" stroke="#22150c" stroke-opacity="0.21" stroke-width="1.2"/><path d="M-36.0 122.1L31.8 122.5" stroke="#22150c" stroke-opacity="0.21" stroke-width="1.2"/><path d="M218.0 122.1L285.8 122.5" stroke="#22150c" stroke-opacity="0.21" stroke-width="1.2"/><path d="M118.9 42.2L187.4 41.5" stroke="#64503a" stroke-opacity="0.25" stroke-width="1.2"/><path d="M-8.1 42.2L60.4 41.5" stroke="#64503a" stroke-opacity="0.25" stroke-width="1.2"/><path d="M245.9 42.2L314.4 41.5" stroke="#64503a" stroke-opacity="0.25" stroke-width="1.2"/><path d="M-6.1 18.0L73.3 17.3" stroke="#64503a" stroke-opacity="0.20" stroke-width="1.2"/><path d="M-133.1 18.0L-53.7 17.3" stroke="#64503a" stroke-opacity="0.20" stroke-width="1.2"/><path d="M120.9 18.0L200.3 17.3" stroke="#64503a" stroke-opacity="0.20" stroke-width="1.2"/><path d="M83.5 59.3L108.0 59.1" stroke="#22150c" stroke-opacity="0.45" stroke-width="1.2"/><path d="M-43.5 59.3L-19.0 59.1" stroke="#22150c" stroke-opacity="0.45" stroke-width="1.2"/><path d="M210.5 59.3L235.0 59.1" stroke="#22150c" stroke-opacity="0.45" stroke-width="1.2"/><path d="M115.3 9.3L170.9 9.8" stroke="#22150c" stroke-opacity="0.34" stroke-width="1"/><path d="M-11.7 9.3L43.9 9.8" stroke="#22150c" stroke-opacity="0.34" stroke-width="1"/><path d="M242.3 9.3L297.9 9.8" stroke="#22150c" stroke-opacity="0.34" stroke-width="1"/><path d="M28.7 49.4L82.9 49.1" stroke="#22150c" stroke-opacity="0.27" stroke-width="1.5"/><path d="M-98.3 49.4L-44.1 49.1" stroke="#22150c" stroke-opacity="0.27" stroke-width="1.5"/><path d="M155.7 49.4L209.9 49.1" stroke="#22150c" stroke-opacity="0.27" stroke-width="1.5"/><path d="M16.0 101.0L124.6 100.7" stroke="#22150c" stroke-opacity="0.23" stroke-width="1"/><path d="M-111.0 101.0L-2.4 100.7" stroke="#22150c" stroke-opacity="0.23" stroke-width="1"/><path d="M143.0 101.0L251.6 100.7" stroke="#22150c" stroke-opacity="0.23" stroke-width="1"/><path d="M-4.4 83.3L46.5 83.5" stroke="#22150c" stroke-opacity="0.39" stroke-width="1"/><path d="M-131.4 83.3L-80.5 83.5" stroke="#22150c" stroke-opacity="0.39" stroke-width="1"/><path d="M122.6 83.3L173.5 83.5" stroke="#22150c" stroke-opacity="0.39" stroke-width="1"/><path d="M92.7 20.3L193.5 20.3" stroke="#22150c" stroke-opacity="0.26" stroke-width="1.5"/><path d="M-34.3 20.3L66.5 20.3" stroke="#22150c" stroke-opacity="0.26" stroke-width="1.5"/><path d="M219.7 20.3L320.5 20.3" stroke="#22150c" stroke-opacity="0.26" stroke-width="1.5"/><path d="M9.1 73.5L112.8 73.6" stroke="#5a3428" stroke-opacity="0.36" stroke-width="1"/><path d="M-117.9 73.5L-14.2 73.6" stroke="#5a3428" stroke-opacity="0.36" stroke-width="1"/><path d="M136.1 73.5L239.8 73.6" stroke="#5a3428" stroke-opacity="0.36" stroke-width="1"/><path d="M76.9 3.4L165.7 3.7" stroke="#22150c" stroke-opacity="0.29" stroke-width="1.2"/><path d="M-50.1 3.4L38.7 3.7" stroke="#22150c" stroke-opacity="0.29" stroke-width="1.2"/><path d="M203.9 3.4L292.7 3.7" stroke="#22150c" stroke-opacity="0.29" stroke-width="1.2"/><path d="M116.6 42.1L165.9 41.6" stroke="#22150c" stroke-opacity="0.19" stroke-width="1.5"/><path d="M-10.4 42.1L38.9 41.6" stroke="#22150c" stroke-opacity="0.19" stroke-width="1.5"/><path d="M243.6 42.1L292.9 41.6" stroke="#22150c" stroke-opacity="0.19" stroke-width="1.5"/><path d="M59.9 115.7L128.2 116.5" stroke="#22150c" stroke-opacity="0.23" stroke-width="1.5"/><path d="M-67.1 115.7L1.2 116.5" stroke="#22150c" stroke-opacity="0.23" stroke-width="1.5"/><path d="M186.9 115.7L255.2 116.5" stroke="#22150c" stroke-opacity="0.23" stroke-width="1.5"/><path d="M68.4 104.6L95.1 104.2" stroke="#64503a" stroke-opacity="0.24" stroke-width="1.2"/><path d="M-58.6 104.6L-31.9 104.2" stroke="#64503a" stroke-opacity="0.24" stroke-width="1.2"/><path d="M195.4 104.6L222.1 104.2" stroke="#64503a" stroke-opacity="0.24" stroke-width="1.2"/><path d="M102.1 73.4L134.8 73.3" stroke="#22150c" stroke-opacity="0.17" stroke-width="1"/><path d="M-24.9 73.4L7.8 73.3" stroke="#22150c" stroke-opacity="0.17" stroke-width="1"/><path d="M229.1 73.4L261.8 73.3" stroke="#22150c" stroke-opacity="0.17" stroke-width="1"/><path d="M116.7 100.2L226.6 100.8" stroke="#22150c" stroke-opacity="0.38" stroke-width="1.5"/><path d="M-10.3 100.2L99.6 100.8" stroke="#22150c" stroke-opacity="0.38" stroke-width="1.5"/><path d="M243.7 100.2L353.6 100.8" stroke="#22150c" stroke-opacity="0.38" stroke-width="1.5"/><path d="M74.1 78.7L161.6 78.2" stroke="#22150c" stroke-opacity="0.27" stroke-width="1"/><path d="M-52.9 78.7L34.6 78.2" stroke="#22150c" stroke-opacity="0.27" stroke-width="1"/><path d="M201.1 78.7L288.6 78.2" stroke="#22150c" stroke-opacity="0.27" stroke-width="1"/><path d="M63.7 49.5L95.2 50.1" stroke="#22150c" stroke-opacity="0.23" stroke-width="1.5"/><path d="M-63.3 49.5L-31.8 50.1" stroke="#22150c" stroke-opacity="0.23" stroke-width="1.5"/><path d="M190.7 49.5L222.2 50.1" stroke="#22150c" stroke-opacity="0.23" stroke-width="1.5"/><path d="M95.2 6.8L178.8 7.0" stroke="#64503a" stroke-opacity="0.27" stroke-width="1.2"/><path d="M-31.8 6.8L51.8 7.0" stroke="#64503a" stroke-opacity="0.27" stroke-width="1.2"/><path d="M222.2 6.8L305.8 7.0" stroke="#64503a" stroke-opacity="0.27" stroke-width="1.2"/><path d="M40.5 60.1L114.7 60.1" stroke="#64503a" stroke-opacity="0.38" stroke-width="1.2"/><path d="M-86.5 60.1L-12.3 60.1" stroke="#64503a" stroke-opacity="0.38" stroke-width="1.2"/><path d="M167.5 60.1L241.7 60.1" stroke="#64503a" stroke-opacity="0.38" stroke-width="1.2"/><path d="M103.2 127.3L199.5 126.7" stroke="#22150c" stroke-opacity="0.28" stroke-width="1.5"/><path d="M-23.8 127.3L72.5 126.7" stroke="#22150c" stroke-opacity="0.28" stroke-width="1.5"/><path d="M230.2 127.3L326.5 126.7" stroke="#22150c" stroke-opacity="0.28" stroke-width="1.5"/><path d="M28.6 120.2L93.0 119.9" stroke="#22150c" stroke-opacity="0.16" stroke-width="1"/><path d="M-98.4 120.2L-34.0 119.9" stroke="#22150c" stroke-opacity="0.16" stroke-width="1"/><path d="M155.6 120.2L220.0 119.9" stroke="#22150c" stroke-opacity="0.16" stroke-width="1"/><path d="M43.7 78.9L94.4 79.5" stroke="#22150c" stroke-opacity="0.39" stroke-width="1.5"/><path d="M-83.3 78.9L-32.6 79.5" stroke="#22150c" stroke-opacity="0.39" stroke-width="1.5"/><path d="M170.7 78.9L221.4 79.5" stroke="#22150c" stroke-opacity="0.39" stroke-width="1.5"/><path d="M104.1 31.3L142.1 31.6" stroke="#5a3428" stroke-opacity="0.44" stroke-width="1.2"/><path d="M-22.9 31.3L15.1 31.6" stroke="#5a3428" stroke-opacity="0.44" stroke-width="1.2"/><path d="M231.1 31.3L269.1 31.6" stroke="#5a3428" stroke-opacity="0.44" stroke-width="1.2"/><path d="M15.2 67.4L59.3 68.2" stroke="#22150c" stroke-opacity="0.22" stroke-width="1"/><path d="M-111.8 67.4L-67.7 68.2" stroke="#22150c" stroke-opacity="0.22" stroke-width="1"/><path d="M142.2 67.4L186.3 68.2" stroke="#22150c" stroke-opacity="0.22" stroke-width="1"/><path d="M108.1 93.5L158.1 93.1" stroke="#22150c" stroke-opacity="0.32" stroke-width="1"/><path d="M-18.9 93.5L31.1 93.1" stroke="#22150c" stroke-opacity="0.32" stroke-width="1"/><path d="M235.1 93.5L285.1 93.1" stroke="#22150c" stroke-opacity="0.32" stroke-width="1"/><path d="M63.3 95.6L164.1 96.2" stroke="#22150c" stroke-opacity="0.39" stroke-width="1"/><path d="M-63.7 95.6L37.1 96.2" stroke="#22150c" stroke-opacity="0.39" stroke-width="1"/><path d="M190.3 95.6L291.1 96.2" stroke="#22150c" stroke-opacity="0.39" stroke-width="1"/><path d="M46.6 73.7L89.7 73.0" stroke="#64503a" stroke-opacity="0.16" stroke-width="1"/><path d="M-80.4 73.7L-37.3 73.0" stroke="#64503a" stroke-opacity="0.16" stroke-width="1"/><path d="M173.6 73.7L216.7 73.0" stroke="#64503a" stroke-opacity="0.16" stroke-width="1"/><path d="M99.9 114.6L152.6 114.3" stroke="#22150c" stroke-opacity="0.33" stroke-width="1"/><path d="M-27.1 114.6L25.6 114.3" stroke="#22150c" stroke-opacity="0.33" stroke-width="1"/><path d="M226.9 114.6L279.6 114.3" stroke="#22150c" stroke-opacity="0.33" stroke-width="1"/><path d="M26.1 58.2L71.9 58.8" stroke="#22150c" stroke-opacity="0.38" stroke-width="1.2"/><path d="M-100.9 58.2L-55.1 58.8" stroke="#22150c" stroke-opacity="0.38" stroke-width="1.2"/><path d="M153.1 58.2L198.9 58.8" stroke="#22150c" stroke-opacity="0.38" stroke-width="1.2"/><path d="M127 70 Q167 73 193 77.5 Q167 82 127 86Z" fill="#7a6444" fill-opacity="0.22"/><path d="M0 70 Q40 73 66 77.5 Q40 82 0 86Z" fill="#7a6444" fill-opacity="0.22"/><path d="M0.0 21.0L60.0 25.0L127.0 33.5" fill="none" stroke="#6a5638" stroke-opacity="0.06" stroke-width="4.5" stroke-linecap="round"/><path d="M0.0 21.0L60.0 25.0L127.0 33.5" fill="none" stroke="#80694a" stroke-opacity="0.2" stroke-width="1.5" stroke-linecap="round"/><path d="M0.0 -107.0L60.0 -103.0L127.0 -94.5" fill="none" stroke="#6a5638" stroke-opacity="0.06" stroke-width="4.5" stroke-linecap="round"/><path d="M0.0 -107.0L60.0 -103.0L127.0 -94.5" fill="none" stroke="#80694a" stroke-opacity="0.2" stroke-width="1.5" stroke-linecap="round"/><path d="M0.0 149.0L60.0 153.0L127.0 161.5" fill="none" stroke="#6a5638" stroke-opacity="0.06" stroke-width="4.5" stroke-linecap="round"/><path d="M0.0 149.0L60.0 153.0L127.0 161.5" fill="none" stroke="#80694a" stroke-opacity="0.2" stroke-width="1.5" stroke-linecap="round"/><path d="M-127.0 21.0L-67.0 25.0L0.0 33.5" fill="none" stroke="#6a5638" stroke-opacity="0.06" stroke-width="4.5" stroke-linecap="round"/><path d="M-127.0 21.0L-67.0 25.0L0.0 33.5" fill="none" stroke="#80694a" stroke-opacity="0.2" stroke-width="1.5" stroke-linecap="round"/><path d="M-127.0 -107.0L-67.0 -103.0L0.0 -94.5" fill="none" stroke="#6a5638" stroke-opacity="0.06" stroke-width="4.5" stroke-linecap="round"/><path d="M-127.0 -107.0L-67.0 -103.0L0.0 -94.5" fill="none" stroke="#80694a" stroke-opacity="0.2" stroke-width="1.5" stroke-linecap="round"/><path d="M-127.0 149.0L-67.0 153.0L0.0 161.5" fill="none" stroke="#6a5638" stroke-opacity="0.06" stroke-width="4.5" stroke-linecap="round"/><path d="M-127.0 149.0L-67.0 153.0L0.0 161.5" fill="none" stroke="#80694a" stroke-opacity="0.2" stroke-width="1.5" stroke-linecap="round"/><path d="M127.0 21.0L187.0 25.0L254.0 33.5" fill="none" stroke="#6a5638" stroke-opacity="0.06" stroke-width="4.5" stroke-linecap="round"/><path d="M127.0 21.0L187.0 25.0L254.0 33.5" fill="none" stroke="#80694a" stroke-opacity="0.2" stroke-width="1.5" stroke-linecap="round"/><path d="M127.0 -107.0L187.0 -103.0L254.0 -94.5" fill="none" stroke="#6a5638" stroke-opacity="0.06" stroke-width="4.5" stroke-linecap="round"/><path d="M127.0 -107.0L187.0 -103.0L254.0 -94.5" fill="none" stroke="#80694a" stroke-opacity="0.2" stroke-width="1.5" stroke-linecap="round"/><path d="M127.0 149.0L187.0 153.0L254.0 161.5" fill="none" stroke="#6a5638" stroke-opacity="0.06" stroke-width="4.5" stroke-linecap="round"/><path d="M127.0 149.0L187.0 153.0L254.0 161.5" fill="none" stroke="#80694a" stroke-opacity="0.2" stroke-width="1.5" stroke-linecap="round"/><path d="M0.0 33.5L46.0 36.0L93.0 40.5L127.0 45.5" fill="none" stroke="#6a5638" stroke-opacity="0.18" stroke-width="5.7" stroke-linecap="round"/><path d="M0.0 33.5L46.0 36.0L93.0 40.5L127.0 45.5" fill="none" stroke="#80694a" stroke-opacity="0.6" stroke-width="1.9" stroke-linecap="round"/><path d="M0.0 -94.5L46.0 -92.0L93.0 -87.5L127.0 -82.5" fill="none" stroke="#6a5638" stroke-opacity="0.18" stroke-width="5.7" stroke-linecap="round"/><path d="M0.0 -94.5L46.0 -92.0L93.0 -87.5L127.0 -82.5" fill="none" stroke="#80694a" stroke-opacity="0.6" stroke-width="1.9" stroke-linecap="round"/><path d="M0.0 161.5L46.0 164.0L93.0 168.5L127.0 173.5" fill="none" stroke="#6a5638" stroke-opacity="0.18" stroke-width="5.7" stroke-linecap="round"/><path d="M0.0 161.5L46.0 164.0L93.0 168.5L127.0 173.5" fill="none" stroke="#80694a" stroke-opacity="0.6" stroke-width="1.9" stroke-linecap="round"/><path d="M-127.0 33.5L-81.0 36.0L-34.0 40.5L0.0 45.5" fill="none" stroke="#6a5638" stroke-opacity="0.18" stroke-width="5.7" stroke-linecap="round"/><path d="M-127.0 33.5L-81.0 36.0L-34.0 40.5L0.0 45.5" fill="none" stroke="#80694a" stroke-opacity="0.6" stroke-width="1.9" stroke-linecap="round"/><path d="M-127.0 -94.5L-81.0 -92.0L-34.0 -87.5L0.0 -82.5" fill="none" stroke="#6a5638" stroke-opacity="0.18" stroke-width="5.7" stroke-linecap="round"/><path d="M-127.0 -94.5L-81.0 -92.0L-34.0 -87.5L0.0 -82.5" fill="none" stroke="#80694a" stroke-opacity="0.6" stroke-width="1.9" stroke-linecap="round"/><path d="M-127.0 161.5L-81.0 164.0L-34.0 168.5L0.0 173.5" fill="none" stroke="#6a5638" stroke-opacity="0.18" stroke-width="5.7" stroke-linecap="round"/><path d="M-127.0 161.5L-81.0 164.0L-34.0 168.5L0.0 173.5" fill="none" stroke="#80694a" stroke-opacity="0.6" stroke-width="1.9" stroke-linecap="round"/><path d="M127.0 33.5L173.0 36.0L220.0 40.5L254.0 45.5" fill="none" stroke="#6a5638" stroke-opacity="0.18" stroke-width="5.7" stroke-linecap="round"/><path d="M127.0 33.5L173.0 36.0L220.0 40.5L254.0 45.5" fill="none" stroke="#80694a" stroke-opacity="0.6" stroke-width="1.9" stroke-linecap="round"/><path d="M127.0 -94.5L173.0 -92.0L220.0 -87.5L254.0 -82.5" fill="none" stroke="#6a5638" stroke-opacity="0.18" stroke-width="5.7" stroke-linecap="round"/><path d="M127.0 -94.5L173.0 -92.0L220.0 -87.5L254.0 -82.5" fill="none" stroke="#80694a" stroke-opacity="0.6" stroke-width="1.9" stroke-linecap="round"/><path d="M127.0 161.5L173.0 164.0L220.0 168.5L254.0 173.5" fill="none" stroke="#6a5638" stroke-opacity="0.18" stroke-width="5.7" stroke-linecap="round"/><path d="M127.0 161.5L173.0 164.0L220.0 168.5L254.0 173.5" fill="none" stroke="#80694a" stroke-opacity="0.6" stroke-width="1.9" stroke-linecap="round"/><path d="M0.0 45.5L46.0 46.5L93.0 50.0L127.0 53.0" fill="none" stroke="#6a5638" stroke-opacity="0.21" stroke-width="5.7" stroke-linecap="round"/><path d="M0.0 45.5L46.0 46.5L93.0 50.0L127.0 53.0" fill="none" stroke="#80694a" stroke-opacity="0.7" stroke-width="1.9" stroke-linecap="round"/><path d="M0.0 -82.5L46.0 -81.5L93.0 -78.0L127.0 -75.0" fill="none" stroke="#6a5638" stroke-opacity="0.21" stroke-width="5.7" stroke-linecap="round"/><path d="M0.0 -82.5L46.0 -81.5L93.0 -78.0L127.0 -75.0" fill="none" stroke="#80694a" stroke-opacity="0.7" stroke-width="1.9" stroke-linecap="round"/><path d="M0.0 173.5L46.0 174.5L93.0 178.0L127.0 181.0" fill="none" stroke="#6a5638" stroke-opacity="0.21" stroke-width="5.7" stroke-linecap="round"/><path d="M0.0 173.5L46.0 174.5L93.0 178.0L127.0 181.0" fill="none" stroke="#80694a" stroke-opacity="0.7" stroke-width="1.9" stroke-linecap="round"/><path d="M-127.0 45.5L-81.0 46.5L-34.0 50.0L0.0 53.0" fill="none" stroke="#6a5638" stroke-opacity="0.21" stroke-width="5.7" stroke-linecap="round"/><path d="M-127.0 45.5L-81.0 46.5L-34.0 50.0L0.0 53.0" fill="none" stroke="#80694a" stroke-opacity="0.7" stroke-width="1.9" stroke-linecap="round"/><path d="M-127.0 -82.5L-81.0 -81.5L-34.0 -78.0L0.0 -75.0" fill="none" stroke="#6a5638" stroke-opacity="0.21" stroke-width="5.7" stroke-linecap="round"/><path d="M-127.0 -82.5L-81.0 -81.5L-34.0 -78.0L0.0 -75.0" fill="none" stroke="#80694a" stroke-opacity="0.7" stroke-width="1.9" stroke-linecap="round"/><path d="M-127.0 173.5L-81.0 174.5L-34.0 178.0L0.0 181.0" fill="none" stroke="#6a5638" stroke-opacity="0.21" stroke-width="5.7" stroke-linecap="round"/><path d="M-127.0 173.5L-81.0 174.5L-34.0 178.0L0.0 181.0" fill="none" stroke="#80694a" stroke-opacity="0.7" stroke-width="1.9" stroke-linecap="round"/><path d="M127.0 45.5L173.0 46.5L220.0 50.0L254.0 53.0" fill="none" stroke="#6a5638" stroke-opacity="0.21" stroke-width="5.7" stroke-linecap="round"/><path d="M127.0 45.5L173.0 46.5L220.0 50.0L254.0 53.0" fill="none" stroke="#80694a" stroke-opacity="0.7" stroke-width="1.9" stroke-linecap="round"/><path d="M127.0 -82.5L173.0 -81.5L220.0 -78.0L254.0 -75.0" fill="none" stroke="#6a5638" stroke-opacity="0.21" stroke-width="5.7" stroke-linecap="round"/><path d="M127.0 -82.5L173.0 -81.5L220.0 -78.0L254.0 -75.0" fill="none" stroke="#80694a" stroke-opacity="0.7" stroke-width="1.9" stroke-linecap="round"/><path d="M127.0 173.5L173.0 174.5L220.0 178.0L254.0 181.0" fill="none" stroke="#6a5638" stroke-opacity="0.21" stroke-width="5.7" stroke-linecap="round"/><path d="M127.0 173.5L173.0 174.5L220.0 178.0L254.0 181.0" fill="none" stroke="#80694a" stroke-opacity="0.7" stroke-width="1.9" stroke-linecap="round"/><path d="M0.0 53.0L30.0 59.0L81.0 61.0L127.0 66.0" fill="none" stroke="#6a5638" stroke-opacity="0.10" stroke-width="4.8" stroke-linecap="round"/><path d="M0.0 53.0L30.0 59.0L81.0 61.0L127.0 66.0" fill="none" stroke="#80694a" stroke-opacity="0.35" stroke-width="1.6" stroke-linecap="round"/><path d="M0.0 -75.0L30.0 -69.0L81.0 -67.0L127.0 -62.0" fill="none" stroke="#6a5638" stroke-opacity="0.10" stroke-width="4.8" stroke-linecap="round"/><path d="M0.0 -75.0L30.0 -69.0L81.0 -67.0L127.0 -62.0" fill="none" stroke="#80694a" stroke-opacity="0.35" stroke-width="1.6" stroke-linecap="round"/><path d="M0.0 181.0L30.0 187.0L81.0 189.0L127.0 194.0" fill="none" stroke="#6a5638" stroke-opacity="0.10" stroke-width="4.8" stroke-linecap="round"/><path d="M0.0 181.0L30.0 187.0L81.0 189.0L127.0 194.0" fill="none" stroke="#80694a" stroke-opacity="0.35" stroke-width="1.6" stroke-linecap="round"/><path d="M-127.0 53.0L-97.0 59.0L-46.0 61.0L0.0 66.0" fill="none" stroke="#6a5638" stroke-opacity="0.10" stroke-width="4.8" stroke-linecap="round"/><path d="M-127.0 53.0L-97.0 59.0L-46.0 61.0L0.0 66.0" fill="none" stroke="#80694a" stroke-opacity="0.35" stroke-width="1.6" stroke-linecap="round"/><path d="M-127.0 -75.0L-97.0 -69.0L-46.0 -67.0L0.0 -62.0" fill="none" stroke="#6a5638" stroke-opacity="0.10" stroke-width="4.8" stroke-linecap="round"/><path d="M-127.0 -75.0L-97.0 -69.0L-46.0 -67.0L0.0 -62.0" fill="none" stroke="#80694a" stroke-opacity="0.35" stroke-width="1.6" stroke-linecap="round"/><path d="M-127.0 181.0L-97.0 187.0L-46.0 189.0L0.0 194.0" fill="none" stroke="#6a5638" stroke-opacity="0.10" stroke-width="4.8" stroke-linecap="round"/><path d="M-127.0 181.0L-97.0 187.0L-46.0 189.0L0.0 194.0" fill="none" stroke="#80694a" stroke-opacity="0.35" stroke-width="1.6" stroke-linecap="round"/><path d="M127.0 53.0L157.0 59.0L208.0 61.0L254.0 66.0" fill="none" stroke="#6a5638" stroke-opacity="0.10" stroke-width="4.8" stroke-linecap="round"/><path d="M127.0 53.0L157.0 59.0L208.0 61.0L254.0 66.0" fill="none" stroke="#80694a" stroke-opacity="0.35" stroke-width="1.6" stroke-linecap="round"/><path d="M127.0 -75.0L157.0 -69.0L208.0 -67.0L254.0 -62.0" fill="none" stroke="#6a5638" stroke-opacity="0.10" stroke-width="4.8" stroke-linecap="round"/><path d="M127.0 -75.0L157.0 -69.0L208.0 -67.0L254.0 -62.0" fill="none" stroke="#80694a" stroke-opacity="0.35" stroke-width="1.6" stroke-linecap="round"/><path d="M127.0 181.0L157.0 187.0L208.0 189.0L254.0 194.0" fill="none" stroke="#6a5638" stroke-opacity="0.10" stroke-width="4.8" stroke-linecap="round"/><path d="M127.0 181.0L157.0 187.0L208.0 189.0L254.0 194.0" fill="none" stroke="#80694a" stroke-opacity="0.35" stroke-width="1.6" stroke-linecap="round"/><path d="M0.0 66.0L35.0 70.6L60.0 75.0L68.0 77.5" fill="none" stroke="#6a5638" stroke-opacity="0.17" stroke-width="5.4" stroke-linecap="round"/><path d="M0.0 66.0L35.0 70.6L60.0 75.0L68.0 77.5" fill="none" stroke="#80694a" stroke-opacity="0.55" stroke-width="1.8" stroke-linecap="round"/><path d="M0.0 -62.0L35.0 -57.4L60.0 -53.0L68.0 -50.5" fill="none" stroke="#6a5638" stroke-opacity="0.17" stroke-width="5.4" stroke-linecap="round"/><path d="M0.0 -62.0L35.0 -57.4L60.0 -53.0L68.0 -50.5" fill="none" stroke="#80694a" stroke-opacity="0.55" stroke-width="1.8" stroke-linecap="round"/><path d="M0.0 194.0L35.0 198.6L60.0 203.0L68.0 205.5" fill="none" stroke="#6a5638" stroke-opacity="0.17" stroke-width="5.4" stroke-linecap="round"/><path d="M0.0 194.0L35.0 198.6L60.0 203.0L68.0 205.5" fill="none" stroke="#80694a" stroke-opacity="0.55" stroke-width="1.8" stroke-linecap="round"/><path d="M-127.0 66.0L-92.0 70.6L-67.0 75.0L-59.0 77.5" fill="none" stroke="#6a5638" stroke-opacity="0.17" stroke-width="5.4" stroke-linecap="round"/><path d="M-127.0 66.0L-92.0 70.6L-67.0 75.0L-59.0 77.5" fill="none" stroke="#80694a" stroke-opacity="0.55" stroke-width="1.8" stroke-linecap="round"/><path d="M-127.0 -62.0L-92.0 -57.4L-67.0 -53.0L-59.0 -50.5" fill="none" stroke="#6a5638" stroke-opacity="0.17" stroke-width="5.4" stroke-linecap="round"/><path d="M-127.0 -62.0L-92.0 -57.4L-67.0 -53.0L-59.0 -50.5" fill="none" stroke="#80694a" stroke-opacity="0.55" stroke-width="1.8" stroke-linecap="round"/><path d="M-127.0 194.0L-92.0 198.6L-67.0 203.0L-59.0 205.5" fill="none" stroke="#6a5638" stroke-opacity="0.17" stroke-width="5.4" stroke-linecap="round"/><path d="M-127.0 194.0L-92.0 198.6L-67.0 203.0L-59.0 205.5" fill="none" stroke="#80694a" stroke-opacity="0.55" stroke-width="1.8" stroke-linecap="round"/><path d="M127.0 66.0L162.0 70.6L187.0 75.0L195.0 77.5" fill="none" stroke="#6a5638" stroke-opacity="0.17" stroke-width="5.4" stroke-linecap="round"/><path d="M127.0 66.0L162.0 70.6L187.0 75.0L195.0 77.5" fill="none" stroke="#80694a" stroke-opacity="0.55" stroke-width="1.8" stroke-linecap="round"/><path d="M127.0 -62.0L162.0 -57.4L187.0 -53.0L195.0 -50.5" fill="none" stroke="#6a5638" stroke-opacity="0.17" stroke-width="5.4" stroke-linecap="round"/><path d="M127.0 -62.0L162.0 -57.4L187.0 -53.0L195.0 -50.5" fill="none" stroke="#80694a" stroke-opacity="0.55" stroke-width="1.8" stroke-linecap="round"/><path d="M127.0 194.0L162.0 198.6L187.0 203.0L195.0 205.5" fill="none" stroke="#6a5638" stroke-opacity="0.17" stroke-width="5.4" stroke-linecap="round"/><path d="M127.0 194.0L162.0 198.6L187.0 203.0L195.0 205.5" fill="none" stroke="#80694a" stroke-opacity="0.55" stroke-width="1.8" stroke-linecap="round"/><path d="M68.0 77.5L60.0 80.0L35.0 83.0L0.0 88.0" fill="none" stroke="#6a5638" stroke-opacity="0.17" stroke-width="5.4" stroke-linecap="round"/><path d="M68.0 77.5L60.0 80.0L35.0 83.0L0.0 88.0" fill="none" stroke="#80694a" stroke-opacity="0.55" stroke-width="1.8" stroke-linecap="round"/><path d="M68.0 -50.5L60.0 -48.0L35.0 -45.0L0.0 -40.0" fill="none" stroke="#6a5638" stroke-opacity="0.17" stroke-width="5.4" stroke-linecap="round"/><path d="M68.0 -50.5L60.0 -48.0L35.0 -45.0L0.0 -40.0" fill="none" stroke="#80694a" stroke-opacity="0.55" stroke-width="1.8" stroke-linecap="round"/><path d="M68.0 205.5L60.0 208.0L35.0 211.0L0.0 216.0" fill="none" stroke="#6a5638" stroke-opacity="0.17" stroke-width="5.4" stroke-linecap="round"/><path d="M68.0 205.5L60.0 208.0L35.0 211.0L0.0 216.0" fill="none" stroke="#80694a" stroke-opacity="0.55" stroke-width="1.8" stroke-linecap="round"/><path d="M-59.0 77.5L-67.0 80.0L-92.0 83.0L-127.0 88.0" fill="none" stroke="#6a5638" stroke-opacity="0.17" stroke-width="5.4" stroke-linecap="round"/><path d="M-59.0 77.5L-67.0 80.0L-92.0 83.0L-127.0 88.0" fill="none" stroke="#80694a" stroke-opacity="0.55" stroke-width="1.8" stroke-linecap="round"/><path d="M-59.0 -50.5L-67.0 -48.0L-92.0 -45.0L-127.0 -40.0" fill="none" stroke="#6a5638" stroke-opacity="0.17" stroke-width="5.4" stroke-linecap="round"/><path d="M-59.0 -50.5L-67.0 -48.0L-92.0 -45.0L-127.0 -40.0" fill="none" stroke="#80694a" stroke-opacity="0.55" stroke-width="1.8" stroke-linecap="round"/><path d="M-59.0 205.5L-67.0 208.0L-92.0 211.0L-127.0 216.0" fill="none" stroke="#6a5638" stroke-opacity="0.17" stroke-width="5.4" stroke-linecap="round"/><path d="M-59.0 205.5L-67.0 208.0L-92.0 211.0L-127.0 216.0" fill="none" stroke="#80694a" stroke-opacity="0.55" stroke-width="1.8" stroke-linecap="round"/><path d="M195.0 77.5L187.0 80.0L162.0 83.0L127.0 88.0" fill="none" stroke="#6a5638" stroke-opacity="0.17" stroke-width="5.4" stroke-linecap="round"/><path d="M195.0 77.5L187.0 80.0L162.0 83.0L127.0 88.0" fill="none" stroke="#80694a" stroke-opacity="0.55" stroke-width="1.8" stroke-linecap="round"/><path d="M195.0 -50.5L187.0 -48.0L162.0 -45.0L127.0 -40.0" fill="none" stroke="#6a5638" stroke-opacity="0.17" stroke-width="5.4" stroke-linecap="round"/><path d="M195.0 -50.5L187.0 -48.0L162.0 -45.0L127.0 -40.0" fill="none" stroke="#80694a" stroke-opacity="0.55" stroke-width="1.8" stroke-linecap="round"/><path d="M195.0 205.5L187.0 208.0L162.0 211.0L127.0 216.0" fill="none" stroke="#6a5638" stroke-opacity="0.17" stroke-width="5.4" stroke-linecap="round"/><path d="M195.0 205.5L187.0 208.0L162.0 211.0L127.0 216.0" fill="none" stroke="#80694a" stroke-opacity="0.55" stroke-width="1.8" stroke-linecap="round"/><path d="M127.0 88.0L100.0 96.0L67.0 102.0L35.0 105.0L0.0 109.0" fill="none" stroke="#6a5638" stroke-opacity="0.09" stroke-width="4.8" stroke-linecap="round"/><path d="M127.0 88.0L100.0 96.0L67.0 102.0L35.0 105.0L0.0 109.0" fill="none" stroke="#80694a" stroke-opacity="0.3" stroke-width="1.6" stroke-linecap="round"/><path d="M127.0 -40.0L100.0 -32.0L67.0 -26.0L35.0 -23.0L0.0 -19.0" fill="none" stroke="#6a5638" stroke-opacity="0.09" stroke-width="4.8" stroke-linecap="round"/><path d="M127.0 -40.0L100.0 -32.0L67.0 -26.0L35.0 -23.0L0.0 -19.0" fill="none" stroke="#80694a" stroke-opacity="0.3" stroke-width="1.6" stroke-linecap="round"/><path d="M127.0 216.0L100.0 224.0L67.0 230.0L35.0 233.0L0.0 237.0" fill="none" stroke="#6a5638" stroke-opacity="0.09" stroke-width="4.8" stroke-linecap="round"/><path d="M127.0 216.0L100.0 224.0L67.0 230.0L35.0 233.0L0.0 237.0" fill="none" stroke="#80694a" stroke-opacity="0.3" stroke-width="1.6" stroke-linecap="round"/><path d="M0.0 88.0L-27.0 96.0L-60.0 102.0L-92.0 105.0L-127.0 109.0" fill="none" stroke="#6a5638" stroke-opacity="0.09" stroke-width="4.8" stroke-linecap="round"/><path d="M0.0 88.0L-27.0 96.0L-60.0 102.0L-92.0 105.0L-127.0 109.0" fill="none" stroke="#80694a" stroke-opacity="0.3" stroke-width="1.6" stroke-linecap="round"/><path d="M0.0 -40.0L-27.0 -32.0L-60.0 -26.0L-92.0 -23.0L-127.0 -19.0" fill="none" stroke="#6a5638" stroke-opacity="0.09" stroke-width="4.8" stroke-linecap="round"/><path d="M0.0 -40.0L-27.0 -32.0L-60.0 -26.0L-92.0 -23.0L-127.0 -19.0" fill="none" stroke="#80694a" stroke-opacity="0.3" stroke-width="1.6" stroke-linecap="round"/><path d="M0.0 216.0L-27.0 224.0L-60.0 230.0L-92.0 233.0L-127.0 237.0" fill="none" stroke="#6a5638" stroke-opacity="0.09" stroke-width="4.8" stroke-linecap="round"/><path d="M0.0 216.0L-27.0 224.0L-60.0 230.0L-92.0 233.0L-127.0 237.0" fill="none" stroke="#80694a" stroke-opacity="0.3" stroke-width="1.6" stroke-linecap="round"/><path d="M254.0 88.0L227.0 96.0L194.0 102.0L162.0 105.0L127.0 109.0" fill="none" stroke="#6a5638" stroke-opacity="0.09" stroke-width="4.8" stroke-linecap="round"/><path d="M254.0 88.0L227.0 96.0L194.0 102.0L162.0 105.0L127.0 109.0" fill="none" stroke="#80694a" stroke-opacity="0.3" stroke-width="1.6" stroke-linecap="round"/><path d="M254.0 -40.0L227.0 -32.0L194.0 -26.0L162.0 -23.0L127.0 -19.0" fill="none" stroke="#6a5638" stroke-opacity="0.09" stroke-width="4.8" stroke-linecap="round"/><path d="M254.0 -40.0L227.0 -32.0L194.0 -26.0L162.0 -23.0L127.0 -19.0" fill="none" stroke="#80694a" stroke-opacity="0.3" stroke-width="1.6" stroke-linecap="round"/><path d="M254.0 216.0L227.0 224.0L194.0 230.0L162.0 233.0L127.0 237.0" fill="none" stroke="#6a5638" stroke-opacity="0.09" stroke-width="4.8" stroke-linecap="round"/><path d="M254.0 216.0L227.0 224.0L194.0 230.0L162.0 233.0L127.0 237.0" fill="none" stroke="#80694a" stroke-opacity="0.3" stroke-width="1.6" stroke-linecap="round"/><path d="M0.0 14.0L127.0 15.0" fill="none" stroke="#80694a" stroke-opacity="0.12" stroke-width="1.4" stroke-linecap="round"/><path d="M0.0 -114.0L127.0 -113.0" fill="none" stroke="#80694a" stroke-opacity="0.12" stroke-width="1.4" stroke-linecap="round"/><path d="M0.0 142.0L127.0 143.0" fill="none" stroke="#80694a" stroke-opacity="0.12" stroke-width="1.4" stroke-linecap="round"/><path d="M-127.0 14.0L0.0 15.0" fill="none" stroke="#80694a" stroke-opacity="0.12" stroke-width="1.4" stroke-linecap="round"/><path d="M-127.0 -114.0L0.0 -113.0" fill="none" stroke="#80694a" stroke-opacity="0.12" stroke-width="1.4" stroke-linecap="round"/><path d="M-127.0 142.0L0.0 143.0" fill="none" stroke="#80694a" stroke-opacity="0.12" stroke-width="1.4" stroke-linecap="round"/><path d="M127.0 14.0L254.0 15.0" fill="none" stroke="#80694a" stroke-opacity="0.12" stroke-width="1.4" stroke-linecap="round"/><path d="M127.0 -114.0L254.0 -113.0" fill="none" stroke="#80694a" stroke-opacity="0.12" stroke-width="1.4" stroke-linecap="round"/><path d="M127.0 142.0L254.0 143.0" fill="none" stroke="#80694a" stroke-opacity="0.12" stroke-width="1.4" stroke-linecap="round"/><path d="M0.0 117.0L127.0 118.0" fill="none" stroke="#80694a" stroke-opacity="0.15" stroke-width="1.4" stroke-linecap="round"/><path d="M0.0 -11.0L127.0 -10.0" fill="none" stroke="#80694a" stroke-opacity="0.15" stroke-width="1.4" stroke-linecap="round"/><path d="M0.0 245.0L127.0 246.0" fill="none" stroke="#80694a" stroke-opacity="0.15" stroke-width="1.4" stroke-linecap="round"/><path d="M-127.0 117.0L0.0 118.0" fill="none" stroke="#80694a" stroke-opacity="0.15" stroke-width="1.4" stroke-linecap="round"/><path d="M-127.0 -11.0L0.0 -10.0" fill="none" stroke="#80694a" stroke-opacity="0.15" stroke-width="1.4" stroke-linecap="round"/><path d="M-127.0 245.0L0.0 246.0" fill="none" stroke="#80694a" stroke-opacity="0.15" stroke-width="1.4" stroke-linecap="round"/><path d="M127.0 117.0L254.0 118.0" fill="none" stroke="#80694a" stroke-opacity="0.15" stroke-width="1.4" stroke-linecap="round"/><path d="M127.0 -11.0L254.0 -10.0" fill="none" stroke="#80694a" stroke-opacity="0.15" stroke-width="1.4" stroke-linecap="round"/><path d="M127.0 245.0L254.0 246.0" fill="none" stroke="#80694a" stroke-opacity="0.15" stroke-width="1.4" stroke-linecap="round"/></pattern></defs><rect width="720" height="540" fill="url(#wd)" filter="url(#bl)"/></svg><div class="a" style="left:-0.5px;top:57.2px;width:720px;text-align:center;font-size:18px;line-height:20px;color:#f6b80e;-webkit-text-stroke:0.25px #f6b80e">Nota sol&nbsp; 40 cm</div><div class="a" style="left:64px;top:126px;width:592px;height:356px;background:#e7e7eb;border-bottom:3px solid #6a8fc8;border-left:1px solid #9ab;border-right:1px solid #9ab"></div><div class="a" style="left:64px;top:126px;width:592px;height:12px;background:linear-gradient(#7ab0f6 0,#3a7ae6 15%,#1f60d8 45%,#1a56cc 75%,#1546b0 100%);border-radius:4px 4px 0 0"></div><div class="a" style="left:65px;top:128px;width:8px;height:8px;background:linear-gradient(135deg,#3aa03a,#1f7a24)"></div><div class="a t" style="left:74.5px;top:128.2px;color:#fff;font-size:6.6px;line-height:8px;transform:none;text-shadow:0 0 0.4px #fff">VA -- VisualAnalyser 8.30.21 --&nbsp; [Points = 4096]&nbsp; [Sampling freq.= 40960Hz]&nbsp; [Ini-C:\Programmi\Sillanum Soft\VA.INI]</div><div class="a" style="left:624px;top:127.5px;width:9px;height:9px;background:linear-gradient(#7aaaf4,#3c76e2);border:1px solid #a8c4f2;border-radius:1.5px"></div><div class="a" style="left:635px;top:127.5px;width:9px;height:9px;background:linear-gradient(#7aaaf4,#3c76e2);border:1px solid #a8c4f2;border-radius:1.5px"></div><div class="a" style="left:646px;top:127.5px;width:9px;height:9px;background:linear-gradient(#f09a80,#d85030);border:1px solid #f0c0b0;border-radius:1.5px"></div><svg class="a" style="left:624px;top:127px" width="32" height="10"><path d="M2.5 7.5h4" stroke="#fff" stroke-width="1.5"/><rect x="13" y="3" width="4" height="4" fill="none" stroke="#fff" stroke-width="1"/><path d="M25 3l4 4M29 3l-4 4" stroke="#fff" stroke-width="1.4"/></svg><div class="btn" style="left:65.5px;top:138.5px;width:13.5px;height:8.5px;line-height:6.5px;color:#aaa"><span>On</span></div><div class="btn" style="left:80px;top:138.5px;width:11px;height:8.5px;line-height:6.5px;"><span><b>Off</b></span></div><div class="btn" style="left:93px;top:138.5px;width:25.5px;height:8.5px;line-height:6.5px;"><span>Settings</span></div><div class="btn" style="left:120px;top:138.5px;width:27.5px;height:8.5px;line-height:6.5px;"><span>Phase</span></div><div class="btn" style="left:148.5px;top:138.5px;width:23.0px;height:8.5px;line-height:6.5px;"><span>Wave</span></div><div class="btn" style="left:172.5px;top:138.5px;width:25.5px;height:8.5px;line-height:6.5px;"><span>Freq.meter</span></div><div class="btn" style="left:199.5px;top:138.5px;width:25.5px;height:8.5px;line-height:6.5px;"><span>Filters</span></div><div class="btn" style="left:226.5px;top:138.5px;width:57.0px;height:8.5px;line-height:6.5px;"><span>Floating Windows mode</span></div><div class="btn" style="left:285px;top:138.5px;width:27px;height:8.5px;line-height:6.5px;"><span><b>HELP</b></span></div><div class="ed" style="left:312.5px;top:138.5px;width:53px;height:8.5px;border-color:#7f9db9">Volume linea</div><div class="a" style="left:357px;top:139.5px;width:7px;height:6.5px;background:#e8e8ec;border:1px solid #ccc"></div><svg class="a" style="left:358px;top:141px" width="6" height="4"><path d="M0.5 0.5h4l-2 2.5z" fill="#000"/></svg><div class="a" style="left:369px;top:140px;width:55px;height:1.5px;background:#b8b8b8;border-bottom:1px solid #fff"></div><div class="a" style="left:370.0px;top:144px;width:0.8px;height:1.5px;background:#555"></div><div class="a" style="left:375.3px;top:144px;width:0.8px;height:1.5px;background:#555"></div><div class="a" style="left:380.6px;top:144px;width:0.8px;height:1.5px;background:#555"></div><div class="a" style="left:385.9px;top:144px;width:0.8px;height:1.5px;background:#555"></div><div class="a" style="left:391.2px;top:144px;width:0.8px;height:1.5px;background:#555"></div><div class="a" style="left:396.5px;top:144px;width:0.8px;height:1.5px;background:#555"></div><div class="a" style="left:401.8px;top:144px;width:0.8px;height:1.5px;background:#555"></div><div class="a" style="left:407.1px;top:144px;width:0.8px;height:1.5px;background:#555"></div><div class="a" style="left:412.4px;top:144px;width:0.8px;height:1.5px;background:#555"></div><div class="a" style="left:417.7px;top:144px;width:0.8px;height:1.5px;background:#555"></div><div class="a" style="left:423.0px;top:144px;width:0.8px;height:1.5px;background:#555"></div><div class="a" style="left:375px;top:139px;width:1.8px;height:5px;background:#777"></div><div class="a" style="left:68px;top:149px;width:15px;height:147px;background:#7c7c7c"></div><div class="a" style="left:83px;top:149px;width:410px;height:147px;background:#000"></div><div class="a t" style="left:69px;top:147.0px;font-size:4.5px;line-height:5px;color:#c4c4c4">43.40</div><div class="a t" style="left:69px;top:165.25px;font-size:4.5px;line-height:5px;color:#c4c4c4">36.16</div><div class="a t" style="left:69px;top:183.5px;font-size:4.5px;line-height:5px;color:#c4c4c4">28.93</div><div class="a t" style="left:69px;top:201.75px;font-size:4.5px;line-height:5px;color:#c4c4c4">21.70</div><div class="a t" style="left:69px;top:220.0px;font-size:4.5px;line-height:5px;color:#c4c4c4">0.00</div><div class="a t" style="left:69px;top:238.25px;font-size:4.5px;line-height:5px;color:#c4c4c4">-7.23</div><div class="a t" style="left:69px;top:256.5px;font-size:4.5px;line-height:5px;color:#c4c4c4">-14.47</div><div class="a t" style="left:69px;top:274.75px;font-size:4.5px;line-height:5px;color:#c4c4c4">-21.70</div><div class="a t" style="left:69px;top:293.0px;font-size:4.5px;line-height:5px;color:#c4c4c4">-28.93</div><div class="a" style="left:68px;top:220.5px;width:5px;height:3px;background:#333"></div><div class="a" style="left:493px;top:149px;width:16px;height:155px;background:#14f014"></div><div class="a t" style="left:495px;top:147.0px;font-size:4.3px;line-height:5px;color:#2a4a2a">2.45</div><div class="a t" style="left:495px;top:165.25px;font-size:4.3px;line-height:5px;color:#2a4a2a">1.83</div><div class="a t" style="left:495px;top:183.5px;font-size:4.3px;line-height:5px;color:#2a4a2a">1.22</div><div class="a t" style="left:495px;top:201.75px;font-size:4.3px;line-height:5px;color:#2a4a2a">0.61</div><div class="a t" style="left:495px;top:220.0px;font-size:4.3px;line-height:5px;color:#2a4a2a">0.00mV</div><div class="a t" style="left:495px;top:238.25px;font-size:4.3px;line-height:5px;color:#2a4a2a">-0.61</div><div class="a t" style="left:495px;top:256.5px;font-size:4.3px;line-height:5px;color:#2a4a2a">-1.22</div><div class="a t" style="left:495px;top:274.75px;font-size:4.3px;line-height:5px;color:#2a4a2a">-1.83</div><div class="a t" style="left:495px;top:293.0px;font-size:4.3px;line-height:5px;color:#2a4a2a">-2.45</div><div class="a" style="left:68px;top:296px;width:37px;height:8.5px;background:#14f014"></div><div class="a t" style="left:69px;top:297px;font-size:5.5px;color:#0a3a0a">0.00 - 21.68mS</div><div class="a" style="left:473px;top:296px;width:36px;height:8.5px;background:#14f014"></div><div class="a t" style="left:475px;top:297.5px;font-size:5.5px;color:#0a3a0a">Subscale =0.70</div><div class="a" style="left:105px;top:298px;width:368px;height:1.5px;background:#a8a8a8;border-bottom:1px solid #fff"></div><div class="a" style="left:107.5px;top:296.5px;width:2px;height:6px;background:#e8e8f0;border:1px solid #8a8aa8"></div><div class="a" style="left:68px;top:304.5px;width:485px;height:4px;background:#f4f4f6"></div><svg class="a" style="left:0;top:0" width="720" height="540"><path d="M124.5 149V296" stroke="#313131" stroke-width="1"/><path d="M165.5 149V296" stroke="#313131" stroke-width="1"/><path d="M205.5 149V296" stroke="#313131" stroke-width="1"/><path d="M246.5 149V296" stroke="#313131" stroke-width="1"/><path d="M286.8 149V296" stroke="#808080" stroke-width="0.8" stroke-dasharray="1.5 2.5"/><path d="M327.5 149V296" stroke="#313131" stroke-width="1"/><path d="M368.5 149V296" stroke="#313131" stroke-width="1"/><path d="M409.5 149V296" stroke="#313131" stroke-width="1"/><path d="M449.5 149V296" stroke="#313131" stroke-width="1"/><path d="M490.5 149V296" stroke="#313131" stroke-width="1"/><path d="M83 168.5H493" stroke="#353535" stroke-width="1"/><path d="M83 186.5H493" stroke="#353535" stroke-width="1"/><path d="M83 204.5H493" stroke="#353535" stroke-width="1"/><path d="M83 241.5H493" stroke="#353535" stroke-width="1"/><path d="M83 259.5H493" stroke="#353535" stroke-width="1"/><path d="M83 277.5H493" stroke="#353535" stroke-width="1"/><path d="M83 296.5H493" stroke="#353535" stroke-width="1"/><path d="M83 222.5H493" stroke="#80c080" stroke-width="1" stroke-dasharray="2 2"/><path d="M83.3 222.5C83.6 223.1 83.8 224.5 85.0 226.0C86.2 227.5 88.1 229.4 90.0 230.8C91.9 232.2 94.0 233.0 96.0 234.0C98.0 235.0 99.7 236.3 101.7 236.3C103.7 236.3 104.6 236.3 107.5 234.0C110.4 231.7 116.1 224.2 118.3 223.3C120.5 222.4 119.3 229.3 120.0 229.0C120.7 228.7 121.3 224.9 122.5 221.7C123.7 218.5 124.5 214.3 126.7 210.8C128.9 207.3 131.9 204.5 135.0 201.7C138.1 198.9 141.3 196.8 144.2 195.0C147.1 193.2 148.9 191.4 151.7 191.3C154.5 191.2 156.7 191.5 160.0 194.2C163.3 196.9 168.2 203.9 170.8 206.7C173.4 209.5 172.5 207.2 175.0 210.0C177.5 212.8 182.2 219.6 185.0 222.5C187.8 225.4 189.3 226.7 190.8 226.7C192.3 226.7 192.2 222.1 193.3 222.5C194.4 222.9 195.0 225.9 197.0 229.0C199.0 232.1 201.7 240.0 205.0 240.0C208.3 240.0 212.3 232.3 215.8 229.2C219.3 226.1 222.1 225.0 225.0 222.5C227.9 220.0 230.9 215.7 232.5 215.0C234.1 214.3 233.2 219.2 234.2 218.3C235.2 217.4 237.3 212.3 238.3 210.0C239.3 207.7 238.8 205.9 240.0 205.0C241.2 204.1 243.2 205.3 245.0 204.7C246.8 204.1 247.7 201.9 250.0 201.7C252.3 201.5 255.1 201.7 258.3 203.3C261.5 204.9 264.5 207.4 268.3 210.8C272.1 214.2 276.9 219.5 280.0 222.5C283.1 225.5 282.3 224.1 285.8 228.0C289.3 231.9 294.0 242.0 300.0 245.0C306.0 248.0 313.9 247.9 320.0 245.0C326.1 242.1 330.9 233.1 335.0 228.7C339.1 224.3 340.7 221.3 343.3 219.7C345.9 218.1 347.8 219.4 350.0 219.5C352.2 219.6 354.1 220.6 355.8 220.5C357.6 220.4 358.6 218.4 360.0 219.0C361.4 219.6 362.5 222.3 364.0 224.0C365.5 225.7 363.8 224.1 368.3 228.7C372.9 233.2 382.7 247.1 390.0 250.0C397.3 252.9 405.3 248.6 410.0 245.0C414.7 241.4 414.7 233.1 416.7 229.2C418.7 225.3 420.2 225.0 421.7 222.5C423.2 220.0 424.0 215.9 425.0 215.0C426.0 214.1 425.9 218.2 427.5 217.5C429.1 216.8 432.0 212.3 434.2 210.8C436.4 209.3 437.2 209.0 440.0 209.2C442.8 209.4 447.4 210.5 450.0 211.7C452.6 212.9 453.2 213.9 455.0 215.8C456.8 217.7 457.8 219.6 460.0 222.5C462.2 225.4 464.9 229.9 467.5 232.5C470.1 235.1 471.8 236.0 475.0 237.5C478.2 239.0 482.7 241.2 485.8 241.3C488.9 241.4 491.3 238.8 492.5 238.3" fill="none" stroke="#2fa82f" stroke-width="1"/></svg><div class="a" style="left:69px;top:308.7px;width:465px;height:161.5px;background:#000"></div><div class="a" style="left:534px;top:308.7px;width:19.5px;height:161.5px;background:#a6c6ee"></div><div class="a" style="left:69px;top:470px;width:484.5px;height:8.5px;background:#8c8c8c;border-top:1px solid #3c8c3c"></div><svg class="a" style="left:0;top:0" width="720" height="540"><path d="M94.0 309V470" stroke="#1f1f1f" stroke-width="1"/><path d="M113.4 309V470" stroke="#1f1f1f" stroke-width="1"/><path d="M128.5 309V470" stroke="#1f1f1f" stroke-width="1"/><path d="M140.7 309V470" stroke="#1f1f1f" stroke-width="1"/><path d="M151.1 309V470" stroke="#1f1f1f" stroke-width="1"/><path d="M160.1 309V470" stroke="#1f1f1f" stroke-width="1"/><path d="M168.1 309V470" stroke="#1f1f1f" stroke-width="1"/><path d="M175.2 309V470" stroke="#1f1f1f" stroke-width="1"/><path d="M221.9 309V470" stroke="#1f1f1f" stroke-width="1"/><path d="M249.3 309V470" stroke="#1f1f1f" stroke-width="1"/><path d="M268.7 309V470" stroke="#1f1f1f" stroke-width="1"/><path d="M283.8 309V470" stroke="#1f1f1f" stroke-width="1"/><path d="M296.0 309V470" stroke="#1f1f1f" stroke-width="1"/><path d="M306.4 309V470" stroke="#1f1f1f" stroke-width="1"/><path d="M315.4 309V470" stroke="#1f1f1f" stroke-width="1"/><path d="M323.4 309V470" stroke="#1f1f1f" stroke-width="1"/><path d="M330.5 309V470" stroke="#1f1f1f" stroke-width="1"/><path d="M377.2 309V470" stroke="#1f1f1f" stroke-width="1"/><path d="M404.6 309V470" stroke="#1f1f1f" stroke-width="1"/><path d="M424.0 309V470" stroke="#1f1f1f" stroke-width="1"/><path d="M439.1 309V470" stroke="#1f1f1f" stroke-width="1"/><path d="M451.3 309V470" stroke="#1f1f1f" stroke-width="1"/><path d="M461.7 309V470" stroke="#1f1f1f" stroke-width="1"/><path d="M470.7 309V470" stroke="#1f1f1f" stroke-width="1"/><path d="M478.7 309V470" stroke="#1f1f1f" stroke-width="1"/><path d="M485.8 309V470" stroke="#1f1f1f" stroke-width="1"/><path d="M532.5 309V470" stroke="#1f1f1f" stroke-width="1"/><path d="M69 323.5H534" stroke="#383838" stroke-width="1"/><path d="M69 338.5H534" stroke="#383838" stroke-width="1"/><path d="M69 353.5H534" stroke="#383838" stroke-width="1"/><path d="M69 367.5H534" stroke="#383838" stroke-width="1"/><path d="M69 382.5H534" stroke="#383838" stroke-width="1"/><path d="M69 397.5H534" stroke="#383838" stroke-width="1"/><path d="M69 411.5H534" stroke="#383838" stroke-width="1"/><path d="M69 426.5H534" stroke="#383838" stroke-width="1"/><path d="M69 441.5H534" stroke="#383838" stroke-width="1"/><path d="M69 455.5H534" stroke="#383838" stroke-width="1"/><path d="M465.5 309V470" stroke="#a898f8" stroke-width="1" stroke-dasharray="2 1.5"/><path d="M68.6 454.3L92.4 457.1L113.5 454.8L128.5 441.6L152.3 467.1L162.0 468.0L169.0 467.1L175.2 464.5L185.7 468.4L193.2 470.0L202.5 443.4L211.3 468.9L216.1 462.7L221.9 394.4L228.4 468.0L231.0 468.0L237.2 460.1L242.5 469.4L248.7 468.0L254.0 469.5L260.1 467.1L263.6 469.5L268.0 466.3L273.3 469.5L276.5 468.0L282.0 469.5L287.0 467.5L292.0 469.5L298.0 468.0L304.0 469.5L308.0 468.4L312.4 468.3L317.9 469.5L321.0 467.8L325.0 469.1L332.0 468.6L338.4 468.6L343.9 469.3L349.4 467.7L354.5 468.0L360.2 469.5L366.3 468.3L370.5 469.5L376.9 468.6L382.8 467.7L388.7 467.6L393.2 467.8L398.0 467.5L404.5 469.4L408.1 469.1L414.9 468.6L420.4 468.9L425.5 468.8L429.9 468.3L435.2 467.6L440.9 467.6L447.4 467.4L453.1 469.2L459.5 467.5L466.1 468.3L472.0 469.1L478.3 468.3L482.4 469.5L488.9 467.4L492.2 467.8L496.8 469.3L501.0 467.9L507.5 469.5L513.0 469.5L518.8 468.9L525.4 467.4L530.4 467.4L533.5 469.4" fill="none" stroke="#24962a" stroke-width="1"/></svg><div class="a t" style="left:503.5px;top:312px;font-size:5.5px;color:#38c8d8">7460.00 Hz</div><div class="a t" style="left:79.0px;top:471px;width:30px;text-align:center;font-size:5.6px;color:#222;transform:none">30</div><div class="a t" style="left:98.4px;top:471px;width:30px;text-align:center;font-size:5.6px;color:#222;transform:none">40</div><div class="a t" style="left:113.5px;top:471px;width:30px;text-align:center;font-size:5.6px;color:#222;transform:none">50</div><div class="a t" style="left:125.7px;top:471px;width:30px;text-align:center;font-size:5.6px;color:#222;transform:none">60</div><div class="a t" style="left:136.1px;top:471px;width:30px;text-align:center;font-size:5.6px;color:#222;transform:none">70</div><div class="a t" style="left:145.1px;top:471px;width:30px;text-align:center;font-size:5.6px;color:#222;transform:none">80</div><div class="a t" style="left:153.1px;top:471px;width:30px;text-align:center;font-size:5.6px;color:#222;transform:none">90</div><div class="a t" style="left:160.2px;top:471px;width:30px;text-align:center;font-size:5.6px;color:#222;transform:none"><b>100</b></div><div class="a t" style="left:206.9px;top:471px;width:30px;text-align:center;font-size:5.6px;color:#222;transform:none">200</div><div class="a t" style="left:234.3px;top:471px;width:30px;text-align:center;font-size:5.6px;color:#222;transform:none">300</div><div class="a t" style="left:253.7px;top:471px;width:30px;text-align:center;font-size:5.6px;color:#222;transform:none">400</div><div class="a t" style="left:268.8px;top:471px;width:30px;text-align:center;font-size:5.6px;color:#222;transform:none">500</div><div class="a t" style="left:281.0px;top:471px;width:30px;text-align:center;font-size:5.6px;color:#222;transform:none">600</div><div class="a t" style="left:291.4px;top:471px;width:30px;text-align:center;font-size:5.6px;color:#222;transform:none">700</div><div class="a t" style="left:315.5px;top:471px;width:30px;text-align:center;font-size:5.6px;color:#222;transform:none"><b>1000</b></div><div class="a t" style="left:362.2px;top:471px;width:30px;text-align:center;font-size:5.6px;color:#222;transform:none">2000</div><div class="a t" style="left:389.6px;top:471px;width:30px;text-align:center;font-size:5.6px;color:#222;transform:none">3000</div><div class="a t" style="left:409.0px;top:471px;width:30px;text-align:center;font-size:5.6px;color:#222;transform:none">4000</div><div class="a t" style="left:424.1px;top:471px;width:30px;text-align:center;font-size:5.6px;color:#222;transform:none">5000</div><div class="a t" style="left:446.7px;top:471px;width:30px;text-align:center;font-size:5.6px;color:#222;transform:none">7000</div><div class="a t" style="left:470.8px;top:471px;width:30px;text-align:center;font-size:5.6px;color:#222;transform:none"><b>10000</b></div><div class="a t" style="left:517.5px;top:471px;width:30px;text-align:center;font-size:5.6px;color:#222;transform:none">20000</div><div class="a t" style="left:545.5px;top:471px;font-size:6px;font-weight:bold;color:#1010e0">Hz</div><div class="a t" style="left:535.5px;top:320.84999999999997px;font-size:4.5px;line-height:5px;color:#333">1418</div><div class="a t" style="left:535.5px;top:335.5px;font-size:4.5px;line-height:5px;color:#333">1277</div><div class="a t" style="left:535.5px;top:350.15px;font-size:4.5px;line-height:5px;color:#333">1135</div><div class="a t" style="left:535.5px;top:364.8px;font-size:4.5px;line-height:5px;color:#333">992.9</div><div class="a t" style="left:535.5px;top:379.45px;font-size:4.5px;line-height:5px;color:#333">851.1</div><div class="a t" style="left:535.5px;top:394.1px;font-size:4.5px;line-height:5px;color:#333">709.2</div><div class="a t" style="left:535.5px;top:408.75px;font-size:4.5px;line-height:5px;color:#333">567.4</div><div class="a t" style="left:535.5px;top:423.4px;font-size:4.5px;line-height:5px;color:#333">425.5</div><div class="a t" style="left:535.5px;top:438.04999999999995px;font-size:4.5px;line-height:5px;color:#333">283.7</div><div class="a t" style="left:535.5px;top:452.7px;font-size:4.5px;line-height:5px;color:#333">141.8</div><div class="a t" style="left:535px;top:309.5px;font-size:4px;color:#555">1xxx</div><div class="a t" style="left:545.5px;top:309px;font-size:5.5px;font-weight:bold;color:#1010e0">Vpp</div><div class="grp" style="left:512px;top:150px;width:64px;height:154px"></div><div class="a t" style="left:513.5px;top:147px;font-size:6px;color:#28d828;background:#e7e7eb;padding:0 1px">Ch A(L)</div><div class="a t" style="left:513px;top:153px;font-size:6px;color:#111">Vpos Trig</div><div class="a" style="left:518.5px;top:160px;width:2px;height:127px;background:#fafafa;border-left:1px solid #8a8a8a"></div><div class="a" style="left:516px;top:223px;width:6.5px;height:2.5px;background:#eee;border:1px solid #888"></div><div class="a" style="left:528.0px;top:160px;width:2px;height:127px;background:#fafafa;border-left:1px solid #8a8a8a"></div><div class="a" style="left:525.5px;top:223px;width:6.5px;height:2.5px;background:#eee;border:1px solid #888"></div><div class="a" style="left:519px;top:288px;width:7px;height:6px;border:1px solid #888;border-top:none"></div><div class="a t" style="left:521px;top:288px;font-size:5.5px;color:#111">0</div><div class="cb" style="left:518px;top:297px"></div><div class="a t" style="left:525px;top:297px;font-size:6px;color:#111">DCremoval</div><div class="a" style="left:571px;top:159px;width:2.5px;height:130px;background:#fff;border:1px solid;border-color:#999 #fff #fff #999"></div><div class="a t" style="left:539px;top:156px;font-size:5px;color:#111;text-decoration:underline">ms/d</div><div class="btn" style="left:552.5px;top:154.5px;width:16px;height:6px;color:#111"><span>Reset</span></div><div class="ed" style="left:538.5px;top:161.5px;width:22px;height:9px;line-height:8px;color:#111">2.1436</div><div class="sp" style="left:560.5px;top:161.5px;width:7.5px;height:4.5px"></div><div class="sp" style="left:560.5px;top:166px;width:7.5px;height:4.5px"></div><div class="a t" style="left:539px;top:176px;font-size:6px;color:#111;text-decoration:underline">Zoom</div><div class="a t" style="left:534.5px;top:183px;font-size:5px;color:#111">x</div><div class="ed" style="left:538.5px;top:181.5px;width:22px;height:8px;line-height:7px;color:#111">20</div><div class="sp" style="left:560.5px;top:181.5px;width:7.5px;height:4px"></div><div class="sp" style="left:560.5px;top:185.5px;width:7.5px;height:4px"></div><div class="cb" style="left:536px;top:195px"></div><svg class="a" style="left:536px;top:195px" width="6" height="6"><path d="M1 2.8L2.3 4.2L5 1.2" fill="none" stroke="#000" stroke-width="1.1"/></svg><div class="a t" style="left:543.5px;top:195px;font-size:6px;color:#111">Trigger</div><div class="grp" style="left:532.5px;top:206px;width:33px;height:43.5px"></div><div class="a t" style="left:534px;top:203px;font-size:6px;color:#111;background:#e7e7eb;padding:0 1px">Trigger</div><div class="a t" style="left:541px;top:210.5px;font-size:6px;color:#111">Slope</div><div class="a" style="left:535px;top:217px;width:5.5px;height:5.5px;border-radius:50%;background:#fff;border:1px solid #888"></div><div class="a t" style="left:542px;top:216.5px;font-size:6px;color:#111">Positive</div><div class="a" style="left:535px;top:224.5px;width:5.5px;height:5.5px;border-radius:50%;background:#fff;border:1px solid #888"></div><div class="a" style="left:536.8px;top:226.3px;width:2px;height:2px;background:#222;border-radius:50%"></div><div class="a t" style="left:542px;top:224px;font-size:6px;color:#111">Negative</div><div class="a t" style="left:536px;top:232px;font-size:4.6px;color:#111">Delta Th%</div><div class="ed" style="left:536px;top:238px;width:20px;height:9px;line-height:8px;color:#111">21</div><div class="sp" style="left:556px;top:238px;width:7px;height:4.5px"></div><div class="sp" style="left:556px;top:242.5px;width:7px;height:4.5px"></div><div class="cb" style="left:535.5px;top:253px"></div><div class="a t" style="left:543px;top:252.5px;font-size:6px;color:#111">D/A</div><div class="a t" style="left:556px;top:296px;font-size:6px;color:#111">-31.74dB</div><div class="a" style="left:572px;top:290px;width:2.5px;height:3px;background:#3a5ab8"></div><div class="grp" style="left:586px;top:150px;width:66px;height:154px"></div><div class="a t" style="left:587.5px;top:147px;font-size:6px;color:#e02828;background:#e7e7eb;padding:0 1px">Ch B(R)</div><div class="a t" style="left:587px;top:153px;font-size:6px;color:#a8a8a8">Vpos Trig</div><div class="a" style="left:592.5px;top:160px;width:2px;height:127px;background:#fafafa;border-left:1px solid #8a8a8a"></div><div class="a" style="left:590px;top:223px;width:6.5px;height:2.5px;background:#eee;border:1px solid #888"></div><div class="a" style="left:602.0px;top:160px;width:2px;height:127px;background:#fafafa;border-left:1px solid #8a8a8a"></div><div class="a" style="left:599.5px;top:223px;width:6.5px;height:2.5px;background:#eee;border:1px solid #888"></div><div class="a" style="left:593px;top:288px;width:7px;height:6px;border:1px solid #888;border-top:none"></div><div class="a t" style="left:595px;top:288px;font-size:5.5px;color:#a8a8a8">0</div><div class="cb" style="left:592px;top:297px"></div><div class="a t" style="left:599px;top:297px;font-size:6px;color:#a8a8a8">DCremoval</div><div class="a" style="left:645px;top:159px;width:2.5px;height:130px;background:#fff;border:1px solid;border-color:#999 #fff #fff #999"></div><div class="a t" style="left:613px;top:156px;font-size:5px;color:#a8a8a8;text-decoration:underline">ms/d</div><div class="btn" style="left:626.5px;top:154.5px;width:16px;height:6px;color:#a8a8a8"><span>Reset</span></div><div class="ed" style="left:612.5px;top:161.5px;width:22px;height:9px;line-height:8px;color:#a8a8a8">2.1436</div><div class="sp" style="left:634.5px;top:161.5px;width:7.5px;height:4.5px"></div><div class="sp" style="left:634.5px;top:166px;width:7.5px;height:4.5px"></div><div class="a t" style="left:613px;top:176px;font-size:6px;color:#a8a8a8;text-decoration:underline">Zoom</div><div class="a t" style="left:608.5px;top:183px;font-size:5px;color:#a8a8a8">x</div><div class="ed" style="left:612.5px;top:181.5px;width:22px;height:8px;line-height:7px;color:#a8a8a8">1</div><div class="sp" style="left:634.5px;top:181.5px;width:7.5px;height:4px"></div><div class="sp" style="left:634.5px;top:185.5px;width:7.5px;height:4px"></div><div class="cb" style="left:610px;top:195px"></div><div class="a t" style="left:617.5px;top:195px;font-size:6px;color:#a8a8a8">Trigger</div><div class="grp" style="left:606.5px;top:206px;width:33px;height:43.5px"></div><div class="a t" style="left:608px;top:203px;font-size:6px;color:#111;background:#e7e7eb;padding:0 1px">Trigger</div><div class="a t" style="left:615px;top:210.5px;font-size:6px;color:#a8a8a8">Slope</div><div class="a" style="left:609px;top:217px;width:5.5px;height:5.5px;border-radius:50%;background:#fff;border:1px solid #888"></div><div class="a t" style="left:616px;top:216.5px;font-size:6px;color:#a8a8a8">Positive</div><div class="a" style="left:609px;top:224.5px;width:5.5px;height:5.5px;border-radius:50%;background:#fff;border:1px solid #888"></div><div class="a" style="left:610.8px;top:218.8px;width:2px;height:2px;background:#999;border-radius:50%"></div><div class="a t" style="left:616px;top:224px;font-size:6px;color:#a8a8a8">Negative</div><div class="a t" style="left:610px;top:232px;font-size:4.6px;color:#a8a8a8">Delta Th%</div><div class="ed" style="left:610px;top:238px;width:20px;height:9px;line-height:8px;color:#a8a8a8">25</div><div class="sp" style="left:630px;top:238px;width:7px;height:4.5px"></div><div class="sp" style="left:630px;top:242.5px;width:7px;height:4.5px"></div><div class="cb" style="left:609.5px;top:253px"></div><div class="a t" style="left:617px;top:252.5px;font-size:6px;color:#a8a8a8">D/A</div><div class="a t" style="left:641px;top:296px;font-size:5px;color:#aaa">-inf dB</div><div class="a" style="left:553.5px;top:308.7px;width:101px;height:161.5px;background:#e7e7eb"></div><div class="a" style="left:555.5px;top:316.5px;width:98px;height:144.5px;border:1px solid #b4b4c0;border-top-color:#d8d8e0"></div><div class="a" style="left:556px;top:307.5px;width:18.5px;height:10px;background:#ededf0;border:1px solid #b4b4c0;border-bottom:none"></div><div class="a t" style="left:559px;top:309.5px;font-size:6px">Main</div><div class="a" style="left:575px;top:309px;width:33px;height:8px;border:1px solid #b4b4c0;border-bottom:none"></div><div class="a t" style="left:577px;top:310px;font-size:6px">X-axis range</div><div class="grp" style="left:557px;top:320px;width:51.5px;height:63.5px"></div><div class="cb" style="left:560.5px;top:323.3px"></div><svg class="a" style="left:560.5px;top:323.3px" width="6" height="6"><path d="M1 2.8L2.3 4.2L5 1.2" fill="none" stroke="#000" stroke-width="1.1"/></svg><div class="a t" style="left:569px;top:322.90000000000003px;font-size:6px">Stay on top</div><div class="cb" style="left:560.5px;top:330.7px"></div><div class="a t" style="left:569px;top:330.33000000000004px;font-size:6px">Volt meter</div><div class="cb" style="left:560.5px;top:338.2px"></div><svg class="a" style="left:560.5px;top:338.16px" width="6" height="6"><path d="M1 2.8L2.3 4.2L5 1.2" fill="none" stroke="#000" stroke-width="1.1"/></svg><div class="a t" style="left:569px;top:337.76000000000005px;font-size:6px">Freq. meter</div><div class="cb" style="left:560.5px;top:345.6px"></div><div class="a t" style="left:569px;top:345.19000000000005px;font-size:6px">Wave Gen.</div><div class="cb" style="left:560.5px;top:353.0px"></div><div class="a t" style="left:569px;top:352.62px;font-size:6px">Phase</div><div class="cb" style="left:560.5px;top:360.4px"></div><div class="a t" style="left:569px;top:360.05px;font-size:6px">THD</div><div class="cb" style="left:560.5px;top:367.9px"></div><div class="a t" style="left:569px;top:367.48px;font-size:6px">THD + Noise</div><div class="cb" style="left:560.5px;top:375.3px;background:#eee"></div><div class="a t" style="left:569px;top:374.91px;font-size:6px;color:#b0b0b0">IHD</div><div class="cb" style="left:584px;top:375.3px"></div><div class="a t" style="left:591px;top:374.91px;font-size:6px">Comp</div><div class="btn" style="left:613px;top:321.3px;width:39.5px;height:7px;line-height:6px"><span>Capture scope</span></div><div class="btn" style="left:613px;top:329px;width:40px;height:7px;line-height:6px"><span>Capture spectrum</span></div><div class="btn" style="left:613px;top:337px;width:25.5px;height:7px;line-height:6px"><span>WaveOn</span></div><div class="btn" style="left:639.5px;top:337px;width:13px;height:7px;line-height:6px"><span>Info</span></div><div class="grp" style="left:613px;top:348px;width:40px;height:35.5px"></div><div class="a t" style="left:620px;top:352.8px;font-size:6px">wait</div><div class="ed" style="left:634px;top:352px;width:14.5px;height:8.5px;line-height:7.5px">110</div><div class="a t" style="left:622px;top:363.8px;font-size:6px">req.</div><div class="ed" style="left:634px;top:363px;width:14.5px;height:8.5px;line-height:7.5px">100</div><div class="a t" style="left:620px;top:374.8px;font-size:6px">used</div><div class="ed" style="left:634px;top:374px;width:14.5px;height:8.5px;line-height:7.5px">0</div><div class="grp" style="left:557px;top:388px;width:51.5px;height:70.5px"></div><div class="a t" style="left:559px;top:385px;font-size:6px;background:#e7e7eb;padding:0 1px">Y - axis</div><div class="a" style="left:566px;top:396px;width:2.5px;height:50px;background:#fff;border:1px solid;border-color:#999 #fff #fff #999"></div><div class="a" style="left:564px;top:410.5px;width:6.5px;height:2.5px;background:#eee;border:1px solid #888"></div><div class="a" style="left:563px;top:396.0px;width:1px;height:1px;background:#777"></div><div class="a" style="left:573px;top:396.0px;width:1px;height:1px;background:#777"></div><div class="a" style="left:563px;top:403.1px;width:1px;height:1px;background:#777"></div><div class="a" style="left:573px;top:403.1px;width:1px;height:1px;background:#777"></div><div class="a" style="left:563px;top:410.2px;width:1px;height:1px;background:#777"></div><div class="a" style="left:573px;top:410.2px;width:1px;height:1px;background:#777"></div><div class="a" style="left:563px;top:417.3px;width:1px;height:1px;background:#777"></div><div class="a" style="left:573px;top:417.3px;width:1px;height:1px;background:#777"></div><div class="a" style="left:563px;top:424.4px;width:1px;height:1px;background:#777"></div><div class="a" style="left:573px;top:424.4px;width:1px;height:1px;background:#777"></div><div class="a" style="left:563px;top:431.5px;width:1px;height:1px;background:#777"></div><div class="a" style="left:573px;top:431.5px;width:1px;height:1px;background:#777"></div><div class="a" style="left:563px;top:438.6px;width:1px;height:1px;background:#777"></div><div class="a" style="left:573px;top:438.6px;width:1px;height:1px;background:#777"></div><div class="a" style="left:563px;top:445.7px;width:1px;height:1px;background:#777"></div><div class="a" style="left:573px;top:445.7px;width:1px;height:1px;background:#777"></div><div class="cb" style="left:583.5px;top:393.5px;"></div><div class="a t" style="left:590.5px;top:393.1px;font-size:6px;">Log</div><div class="cb" style="left:583.5px;top:401.7px;"></div><div class="a t" style="left:590.5px;top:401.3px;font-size:6px;">Hold</div><div class="cb" style="left:583.5px;top:409.9px;background:#eee"></div><div class="a t" style="left:590.5px;top:409.5px;font-size:6px;color:#b0b0b0">Lines</div><svg class="a" style="left:583.5px;top:409.9px" width="6" height="6"><path d="M1 2.8L2.3 4.2L5 1.2" fill="none" stroke="#aaa" stroke-width="1.1"/></svg><div class="cb" style="left:583.5px;top:418.1px;"></div><div class="a t" style="left:590.5px;top:417.70000000000005px;font-size:6px;">Info</div><div class="a t" style="left:579px;top:425.5px;font-size:6px">Average</div><div class="ed" style="left:579px;top:432px;width:25.5px;height:7.5px;line-height:6.5px">40</div><div class="a" style="left:597px;top:433px;width:7px;height:5.5px;background:#e8e8ec;border:1px solid #bbb"></div><div class="a t" style="left:579px;top:442px;font-size:6px">Step</div><div class="ed" style="left:579px;top:447px;width:25.5px;height:8px;line-height:7px">1 dB</div><div class="a" style="left:597px;top:448px;width:7px;height:6px;background:#e8e8ec;border:1px solid #bbb"></div><div class="btn" style="left:561px;top:449px;width:14.5px;height:7px;line-height:5.5px"><span>Auto</span></div><div class="grp" style="left:613px;top:388px;width:40px;height:46px"></div><div class="a t" style="left:615px;top:385px;font-size:6px;background:#e7e7eb;padding:0 1px">X - axis</div><div class="cb" style="left:616px;top:393.5px"></div><svg class="a" style="left:616px;top:393.5px" width="6" height="6"><path d="M1 2.8L2.3 4.2L5 1.2" fill="none" stroke="#000" stroke-width="1.1"/></svg><div class="a t" style="left:623px;top:393px;font-size:6px">Log</div><div class="cb" style="left:616px;top:401.5px;background:#eee"></div><div class="a t" style="left:623px;top:401.5px;font-size:5px;color:#b8b8b8">Start X</div><div class="ed" style="left:616px;top:410px;width:32px;height:8.5px;line-height:7.5px;font-size:5.3px">Fit screen</div><div class="a" style="left:641px;top:411px;width:7px;height:6.5px;background:#e8e8ec;border:1px solid #bbb"></div><div class="ed" style="left:616px;top:421px;width:32px;height:8.5px;line-height:7.5px;background:#ececef;color:#aaa">1/12</div><div class="a" style="left:641px;top:422px;width:7px;height:6.5px;background:#e0e0e4;border:1px solid #ccc"></div><div class="grp" style="left:613px;top:441px;width:40px;height:17.5px"></div><div class="a t" style="left:615px;top:436px;font-size:6px;background:#e7e7eb;padding:0 1px">Channel(s)</div><div class="ed" style="left:616px;top:446px;width:32px;height:8.5px;line-height:7.5px">Ch A</div><div class="a" style="left:641px;top:447px;width:7px;height:6.5px;background:#e8e8ec;border:1px solid #bbb"></div><svg class="a" style="left:358px;top:141px" width="6" height="4"><path d="M0.5 0.5h4l-2 2.5z" fill="#000"/></svg><svg class="a" style="left:598px;top:434.5px" width="6" height="4"><path d="M0.5 0.5h4l-2 2.5z" fill="#000"/></svg><svg class="a" style="left:598px;top:449.5px" width="6" height="4"><path d="M0.5 0.5h4l-2 2.5z" fill="#000"/></svg><svg class="a" style="left:642px;top:412.5px" width="6" height="4"><path d="M0.5 0.5h4l-2 2.5z" fill="#000"/></svg><svg class="a" style="left:642px;top:448.5px" width="6" height="4"><path d="M0.5 0.5h4l-2 2.5z" fill="#000"/></svg><div class="a" style="left:188px;top:229px;width:245.5px;height:81px;background:#e8e8ec;border:1.5px solid #7ea6e8;border-top:none"></div><div class="a" style="left:188px;top:229px;width:245.5px;height:13.5px;background:linear-gradient(#80b4f8 0,#3d7ee8 18%,#2566dc 50%,#1f5ad2 80%,#1a4cc0 100%);border-radius:4px 4px 0 0"></div><div class="a" style="left:190px;top:232px;width:8px;height:8px;background:linear-gradient(135deg,#3aa03a,#1f7a24)"></div><div class="a t" style="left:199.5px;top:232px;font-size:6.6px;line-height:9px;color:#fff;transform:none;text-shadow:0 0 0.4px #fff">Multifunction Counter [ Hz ]</div><div class="a" style="left:401px;top:231px;width:9px;height:9px;background:linear-gradient(#7aaaf4,#3c76e2);border:1px solid #a8c4f2;border-radius:1.5px"></div><div class="a" style="left:411px;top:231px;width:9px;height:9px;background:linear-gradient(#7aaaf4,#3c76e2);border:1px solid #a8c4f2;border-radius:1.5px"></div><div class="a" style="left:421px;top:231px;width:10px;height:9px;background:linear-gradient(#7aaaf4,#3c76e2);border:1px solid #a8c4f2;border-radius:1.5px"></div><svg class="a" style="left:401px;top:231px" width="32" height="10"><path d="M2.5 7h4" stroke="#fff" stroke-width="1.5"/><rect x="12.5" y="2.5" width="4.5" height="4.5" fill="none" stroke="#fff" stroke-width="1"/><path d="M23.5 2.5l5 5M28.5 2.5l-5 5" stroke="#fff" stroke-width="1.4"/></svg><div class="grp" style="left:191px;top:243.5px;width:38px;height:56px"></div><div class="a t" style="left:193px;top:241.5px;font-size:6px;background:#e8e8ec;padding:0 1px">Resolution</div><div class="a" style="left:194px;top:249.5px;width:5.5px;height:5.5px;border-radius:50%;background:#fff;border:1px solid #888"></div><div class="a t" style="left:202px;top:249.0px;font-size:5.6px">10.00 Hz</div><div class="a" style="left:194px;top:256.4px;width:5.5px;height:5.5px;border-radius:50%;background:#fff;border:1px solid #888"></div><div class="a t" style="left:202px;top:255.95px;font-size:5.6px">5.00 Hz</div><div class="a" style="left:194px;top:263.4px;width:5.5px;height:5.5px;border-radius:50%;background:#fff;border:1px solid #888"></div><div class="a t" style="left:202px;top:262.9px;font-size:5.6px">2.50 Hz</div><div class="a" style="left:194px;top:270.4px;width:5.5px;height:5.5px;border-radius:50%;background:#fff;border:1px solid #888"></div><div class="a t" style="left:202px;top:269.85px;font-size:5.6px">1.25 Hz</div><div class="a" style="left:194px;top:277.3px;width:5.5px;height:5.5px;border-radius:50%;background:#fff;border:1px solid #888"></div><div class="a t" style="left:202px;top:276.8px;font-size:5.6px">0.63 Hz</div><div class="a" style="left:194px;top:284.2px;width:5.5px;height:5.5px;border-radius:50%;background:#fff;border:1px solid #888"></div><div class="a t" style="left:202px;top:283.75px;font-size:5.6px">0.31 Hz</div><div class="a" style="left:194px;top:291.2px;width:5.5px;height:5.5px;border-radius:50%;background:#fff;border:1px solid #888"></div><div class="a t" style="left:202px;top:290.7px;font-size:5.6px">0.16 Hz</div><div class="a" style="left:195.8px;top:293.5px;width:2px;height:2px;background:#111;border-radius:50%"></div><div class="a" style="left:230px;top:242.5px;width:194px;height:57px;background:#000"></div><div class="a" style="left:424px;top:242.5px;width:9px;height:57px;background:#fff"></div><div class="a" style="left:424.5px;top:291.5px;width:7.5px;height:5px;background:#3a5aa8"></div><div class="a" style="left:229.9px;top:244.5px;font-size:54px;line-height:60px;color:#14f514">2</div><div class="a" style="left:260.8px;top:244.5px;font-size:54px;line-height:60px;color:#14f514">0</div><div class="a" style="left:290.7px;top:244.5px;font-size:54px;line-height:60px;color:#14f514">0</div><div class="a" style="left:320px;top:244.5px;font-size:54px;line-height:60px;color:#14f514">.</div><div class="a" style="left:334.6px;top:244.5px;font-size:54px;line-height:60px;color:#14f514">0</div><div class="a" style="left:365.1px;top:244.5px;font-size:54px;line-height:60px;color:#14f514">0</div><div class="a" style="left:394.8px;top:244.5px;font-size:54px;line-height:60px;color:#14f514">0</div><div class="a" style="left:191px;top:300.5px;width:5.5px;height:5.5px;border-radius:50%;background:#fff;border:1px solid #888"></div><div class="a t" style="left:198.5px;top:300px;font-size:5.8px">Frequency meter</div><div class="a" style="left:239px;top:300.5px;width:5.5px;height:5.5px;border-radius:50%;background:#fff;border:1px solid #888"></div><div class="a t" style="left:246.5px;top:300px;font-size:5.8px">Periodimeter</div><div class="a" style="left:278.5px;top:300.5px;width:5.5px;height:5.5px;border-radius:50%;background:#fff;border:1px solid #888"></div><div class="a t" style="left:286.0px;top:300px;font-size:5.8px">Counter</div><div class="a" style="left:192.8px;top:302.3px;width:2px;height:2px;background:#111;border-radius:50%"></div><div class="cb" style="left:316px;top:300px"></div><div class="a t" style="left:324px;top:300px;font-size:5.8px">Hold</div></body></html>
